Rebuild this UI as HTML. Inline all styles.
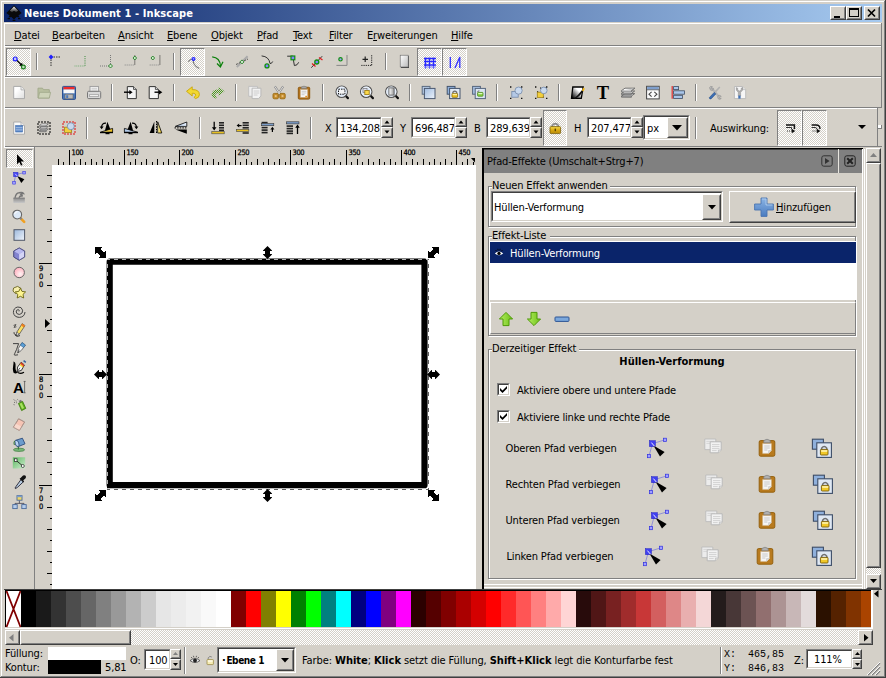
<!DOCTYPE html>
<html lang="de"><head><meta charset="utf-8"><title>Neues Dokument 1 - Inkscape</title>
<style>
html,body{margin:0;padding:0}
body{width:886px;height:678px;overflow:hidden;background:#d4d0c8;position:relative;font-family:"DejaVu Sans Condensed","Liberation Sans",sans-serif;font-size:11px;color:#000}
div,svg{position:absolute;box-sizing:border-box}
.t{white-space:nowrap;line-height:13px;height:13px;letter-spacing:-0.15px}
.t b,.b{letter-spacing:0}
.ic{overflow:visible}
u{text-decoration:underline;text-underline-offset:1px}
.chk{background-image:conic-gradient(#fff 25%,#d4d0c8 0 50%,#fff 0 75%,#d4d0c8 0);background-size:2px 2px}
.sunk{border:1px solid;border-color:#808080 #fff #fff #808080;background:#fff}
.sunk>i{position:absolute;left:0;top:0;right:0;bottom:0;border:1px solid;border-color:#404040 #d4d0c8 #d4d0c8 #404040}
.btn{border:1px solid;border-color:#fff #404040 #404040 #fff;background:#d4d0c8}
.btn>i{position:absolute;left:0;top:0;right:0;bottom:0;border:1px solid;border-color:#d4d0c8 #808080 #808080 #d4d0c8}
.tog{border:1px solid;border-color:#808080 #fff #fff #808080}
</style></head><body>
<div style="left:0px;top:0px;width:886px;height:678px;background:#d4d0c8"></div>
<div style="left:0px;top:0px;width:885px;height:1px;background:#d4d0c8"></div>
<div style="left:0px;top:0px;width:1px;height:677px;background:#d4d0c8"></div>
<div style="left:1px;top:1px;width:883px;height:1px;background:#ffffff"></div>
<div style="left:1px;top:1px;width:1px;height:675px;background:#ffffff"></div>
<div style="left:885px;top:0px;width:1px;height:678px;background:#404040"></div>
<div style="left:0px;top:677px;width:886px;height:1px;background:#404040"></div>
<div style="left:884px;top:1px;width:1px;height:676px;background:#808080"></div>
<div style="left:1px;top:676px;width:884px;height:1px;background:#808080"></div>
<div style="left:4px;top:4px;width:878px;height:18px;background:linear-gradient(90deg,#0a246a,#a6caf0)"></div>
<div class="t" style="left:24px;top:7px;color:#fff;font-weight:bold;font-size:11px;letter-spacing:0.1px">Neues Dokument 1 - Inkscape</div>
<svg class="ic" style="left:5.5px;top:5.0px" width="16" height="16" viewBox="0 0 16 16"><defs><linearGradient id="gik" x1="0" y1="0" x2="0" y2="1"><stop offset="0" stop-color="#fff"/><stop offset="0.5" stop-color="#888"/><stop offset="1" stop-color="#222"/></linearGradient></defs><path d="M8 0.3L15.7 8L12.4 10.6L13.6 12.4L10.6 12L8 14.4L5.4 12L2.4 12.4L3.6 10.6L0.3 8Z" fill="#0a0a0a"/><path d="M8 1.6L12.2 5.8L10 7.2L8 5.8L6 7.2L3.8 5.8Z" fill="url(#gik)"/><path d="M1.6 13.6h2.4M12 13.6h2.4M6.6 15.4h2.8" stroke="#0a0a0a" stroke-width="1.2"/></svg>
<div class="btn" style="left:830px;top:6px;width:16px;height:14px;"><i></i></div>
<svg class="ic" style="left:830.0px;top:5.0px" width="16" height="16" viewBox="0 0 16 16"><rect x="4" y="11" width="6" height="2" fill="#000"/></svg>
<div class="btn" style="left:846px;top:6px;width:16px;height:14px;"><i></i></div>
<svg class="ic" style="left:846.0px;top:5.0px" width="16" height="16" viewBox="0 0 16 16"><rect x="3.5" y="3.5" width="9" height="8" fill="none" stroke="#000" stroke-width="1"/><rect x="3" y="3" width="10" height="2" fill="#000"/></svg>
<div class="btn" style="left:864px;top:6px;width:16px;height:14px;"><i></i></div>
<svg class="ic" style="left:864.0px;top:5.0px" width="16" height="16" viewBox="0 0 16 16"><path d="M4 4.5L11 11.5M11 4.5L4 11.5" stroke="#000" stroke-width="1.7"/></svg>
<div class="t" style="left:14px;top:29px;"><u>D</u>atei</div>
<div class="t" style="left:52px;top:29px;"><u>B</u>earbeiten</div>
<div class="t" style="left:118px;top:29px;"><u>A</u>nsicht</div>
<div class="t" style="left:167px;top:29px;"><u>E</u>bene</div>
<div class="t" style="left:211px;top:29px;"><u>O</u>bjekt</div>
<div class="t" style="left:257px;top:29px;"><u>P</u>fad</div>
<div class="t" style="left:293px;top:29px;"><u>T</u>ext</div>
<div class="t" style="left:329px;top:29px;"><u>F</u>ilter</div>
<div class="t" style="left:367px;top:29px;">E<u>r</u>weiterungen</div>
<div class="t" style="left:451px;top:29px;"><u>H</u>ilfe</div>
<div style="left:4px;top:23px;width:877px;height:1px;background:#ffffff"></div>
<div style="left:4px;top:45px;width:877px;height:1px;background:#808080"></div>
<div style="left:4px;top:46px;width:877px;height:1px;background:#ffffff"></div>
<div style="left:4px;top:76px;width:877px;height:1px;background:#808080"></div>
<div style="left:4px;top:77px;width:877px;height:1px;background:#ffffff"></div>
<div style="left:4px;top:107px;width:877px;height:1px;background:#808080"></div>
<div style="left:4px;top:108px;width:877px;height:1px;background:#ffffff"></div>
<div style="left:877px;top:108px;width:5px;height:1px;background:#d4d0c8"></div>
<div style="left:4px;top:146px;width:874px;height:1px;background:#808080"></div>
<div style="left:878px;top:146px;width:4px;height:1px;background:#808080"></div>
<div style="left:881px;top:23px;width:1px;height:85px;background:#808080"></div>
<div style="left:877px;top:108px;width:1px;height:39px;background:#808080"></div>
<div style="left:4px;top:23px;width:1px;height:124px;background:#ffffff"></div>
<div style="left:878px;top:125px;width:3px;height:3px;background:#fff"></div>
<div style="left:881px;top:125px;width:1px;height:4px;background:#808080"></div>
<div style="left:878px;top:128px;width:4px;height:1px;background:#808080"></div>
<div class="tog chk" style="left:6px;top:48px;width:25px;height:28px;"></div>
<div class="tog chk" style="left:180px;top:48px;width:25px;height:28px;"></div>
<div class="tog chk" style="left:417px;top:48px;width:25px;height:28px;"></div>
<div class="tog chk" style="left:442px;top:48px;width:25px;height:28px;"></div>
<div style="left:36px;top:53px;width:1px;height:17px;background:#808080"></div>
<div style="left:37px;top:53px;width:1px;height:17px;background:#ffffff"></div>
<div style="left:173px;top:53px;width:1px;height:17px;background:#808080"></div>
<div style="left:174px;top:53px;width:1px;height:17px;background:#ffffff"></div>
<div style="left:385px;top:53px;width:1px;height:17px;background:#808080"></div>
<div style="left:386px;top:53px;width:1px;height:17px;background:#ffffff"></div>
<svg class="ic" style="left:7.0px;top:50.0px" width="24" height="24" viewBox="0 0 24 24"><path d="M9 9.5L15 15.5" stroke="#000" stroke-width="1.3"/><path d="M16 16.5L12.2 15.6L15.1 12.7Z" fill="#000"/><circle cx="8.2" cy="8.9" r="1.9" fill="#c8c8ff" stroke="#2020ff" stroke-width="1.2"/><circle cx="16.4" cy="17" r="1.9" fill="#c0e0c0" stroke="#208020" stroke-width="1.2"/></svg>
<svg class="ic" style="left:44.0px;top:50.0px" width="24" height="24" viewBox="0 0 24 24"><path d="M7 7H17M7 7V17" stroke="#333" stroke-width="1" stroke-dasharray="1.5 1"/><path d="M7 4.6L9.4 7L7 9.4L4.6 7Z" fill="#2020ff"/></svg>
<svg class="ic" style="left:68.5px;top:50.0px" width="24" height="24" viewBox="0 0 24 24"><path d="M16 6V16" stroke="#3a8a3a" stroke-width="1" stroke-dasharray="1 1.2"/><path d="M5.5 16H16" stroke="#7ab07a" stroke-width="1.2" stroke-dasharray="1 0.8"/></svg>
<svg class="ic" style="left:93.5px;top:50.0px" width="24" height="24" viewBox="0 0 24 24"><path d="M16.5 5V16M6 16H16.5" stroke="#777" stroke-width="1" stroke-dasharray="1 1"/><path d="M16.5 14L18.5 16L16.5 18L14.5 16Z" fill="#d0e8d0" stroke="#208020" stroke-width="0.9"/></svg>
<svg class="ic" style="left:118.5px;top:50.0px" width="24" height="24" viewBox="0 0 24 24"><path d="M5.7 15H15.8" stroke="#888" stroke-width="1" stroke-dasharray="1 1"/><path d="M15.8 5.5V15" stroke="#222" stroke-width="1" stroke-dasharray="1 1"/><path d="M15.8 6L17.6 8L15.8 10L14 8Z" fill="#d0e8d0" stroke="#208020" stroke-width="0.9"/></svg>
<svg class="ic" style="left:143.5px;top:50.0px" width="24" height="24" viewBox="0 0 24 24"><path d="M5.7 15H15.9" stroke="#888" stroke-width="1" stroke-dasharray="1 1"/><path d="M15.9 5.5V15" stroke="#222" stroke-width="1" stroke-dasharray="1 1"/><path d="M8.8 6L10.6 8L8.8 10L7 8Z" fill="#d0e8d0" stroke="#208020" stroke-width="0.9"/></svg>
<svg class="ic" style="left:180.5px;top:50.0px" width="24" height="24" viewBox="0 0 24 24"><path d="M7.3 11.6Q9.5 8.5 12.5 9Q11 15 18.2 18.4" fill="none" stroke="#777" stroke-width="1.1"/><circle cx="12.5" cy="8.9" r="2" fill="#2020ff"/><circle cx="12.5" cy="8.9" r="0.8" fill="#a0a0ff"/></svg>
<svg class="ic" style="left:205.0px;top:50.0px" width="24" height="24" viewBox="0 0 24 24"><path d="M7.2 6.8Q15 7.5 15.5 16" fill="none" stroke="#0a800a" stroke-width="1.2"/><path d="M12 13.5L15.4 17L18 11.8" fill="none" stroke="#0a800a" stroke-width="1.2"/></svg>
<svg class="ic" style="left:230.0px;top:50.0px" width="24" height="24" viewBox="0 0 24 24"><path d="M6.8 17L17.6 6.2" stroke="#aaa" stroke-width="2"/><path d="M6 14.5L18 9" stroke="#333" stroke-width="0.8" stroke-dasharray="2 1"/><path d="M12 9.9L14 11.9L12 13.9L10 11.9Z" fill="#d0e8d0" stroke="#208020" stroke-width="0.9"/></svg>
<svg class="ic" style="left:255.0px;top:50.0px" width="24" height="24" viewBox="0 0 24 24"><path d="M6.6 5.9Q14 6.5 15 13.5Q16.5 14 17.7 11.5" fill="none" stroke="#333" stroke-width="1"/><circle cx="12" cy="15.9" r="2" fill="#8080ff" stroke="#109010" stroke-width="1.3"/></svg>
<svg class="ic" style="left:280.0px;top:50.0px" width="24" height="24" viewBox="0 0 24 24"><path d="M7.2 6.2H12.8Q13.5 11 14.4 15.6Q17.5 15.5 18.7 12.3" fill="none" stroke="#333" stroke-width="1"/><rect x="11" y="6" width="3.8" height="3.8" fill="#8080ff" stroke="#109010" stroke-width="1.2"/></svg>
<svg class="ic" style="left:305.0px;top:50.0px" width="24" height="24" viewBox="0 0 24 24"><path d="M6.3 17.7L17.2 6.2" stroke="#333" stroke-width="1"/><path d="M7 13.5L10.5 16.5M14 7.5L17.5 10" stroke="#e02020" stroke-width="1.3"/><circle cx="11.8" cy="12" r="2" fill="#8080ff" stroke="#109010" stroke-width="1.3"/></svg>
<svg class="ic" style="left:330.0px;top:50.0px" width="24" height="24" viewBox="0 0 24 24"><path d="M6.4 15.4H17V5" fill="none" stroke="#888" stroke-width="1"/><circle cx="10.5" cy="9.3" r="1.7" fill="#a0a0ff" stroke="#109010" stroke-width="1.2"/></svg>
<svg class="ic" style="left:355.0px;top:50.0px" width="24" height="24" viewBox="0 0 24 24"><path d="M10.2 6.6V12M7.5 9.3H13" stroke="#222" stroke-width="1.2"/><path d="M6.3 15.4H16.7M16.7 5.2V15.4" stroke="#222" stroke-width="1" stroke-dasharray="1.2 1" fill="none"/></svg>
<svg class="ic" style="left:392.0px;top:50.0px" width="24" height="24" viewBox="0 0 24 24"><defs><linearGradient id="gpg" x1="0" y1="0" x2="1" y2="1"><stop offset="0" stop-color="#fff"/><stop offset="1" stop-color="#bbb"/></linearGradient></defs><rect x="9" y="6" width="8" height="12" fill="#444"/><rect x="8.2" y="5.2" width="8" height="11.8" fill="url(#gpg)" stroke="#666" stroke-width="0.6"/></svg>
<svg class="ic" style="left:417.0px;top:50.0px" width="24" height="24" viewBox="0 0 24 24"><path d="M7 8.5H19M7 11.5H19M7 15H19M8.5 7.5V18.5M12.5 7.5V18.5M16.5 7.5V18.5" stroke="#2828ff" stroke-width="1.3"/><path d="M7 17H19" stroke="#9090ff" stroke-width="1"/></svg>
<svg class="ic" style="left:443.0px;top:50.0px" width="24" height="24" viewBox="0 0 24 24"><path d="M7.3 7V18M12 18L16.8 7V18" fill="none" stroke="#3030ff" stroke-width="1.3"/></svg>
<div style="left:111px;top:84px;width:1px;height:17px;background:#808080"></div>
<div style="left:112px;top:84px;width:1px;height:17px;background:#ffffff"></div>
<div style="left:173px;top:84px;width:1px;height:17px;background:#808080"></div>
<div style="left:174px;top:84px;width:1px;height:17px;background:#ffffff"></div>
<div style="left:235px;top:84px;width:1px;height:17px;background:#808080"></div>
<div style="left:236px;top:84px;width:1px;height:17px;background:#ffffff"></div>
<div style="left:322px;top:84px;width:1px;height:17px;background:#808080"></div>
<div style="left:323px;top:84px;width:1px;height:17px;background:#ffffff"></div>
<div style="left:409px;top:84px;width:1px;height:17px;background:#808080"></div>
<div style="left:410px;top:84px;width:1px;height:17px;background:#ffffff"></div>
<div style="left:496px;top:84px;width:1px;height:17px;background:#808080"></div>
<div style="left:497px;top:84px;width:1px;height:17px;background:#ffffff"></div>
<div style="left:558px;top:84px;width:1px;height:17px;background:#808080"></div>
<div style="left:559px;top:84px;width:1px;height:17px;background:#ffffff"></div>
<div style="left:695px;top:84px;width:1px;height:17px;background:#808080"></div>
<div style="left:696px;top:84px;width:1px;height:17px;background:#ffffff"></div>
<svg class="ic" style="left:6.5px;top:81.0px" width="24" height="24" viewBox="0 0 24 24"><defs><linearGradient id="gnew" x1="0" y1="0" x2="1" y2="1"><stop offset="0.3" stop-color="#fff"/><stop offset="1" stop-color="#ddd"/></linearGradient></defs><path d="M6.7 5.4H14L17.5 8.9V17.6H6.7Z" fill="url(#gnew)" stroke="#aaa" stroke-width="1"/><path d="M14 5.4V8.9H17.5" fill="#eee" stroke="#aaa" stroke-width="0.8"/></svg>
<svg class="ic" style="left:31.5px;top:81.0px" width="24" height="24" viewBox="0 0 24 24"><path d="M6 7.2H10.5L11.5 8.7H17.3V17H6Z" fill="#b9c0a0" stroke="#a3aa8c" stroke-width="1"/><path d="M6.3 17L7.6 11.3H18.6L17.3 17Z" fill="#cdd3b8" stroke="#a3aa8c" stroke-width="0.9"/></svg>
<svg class="ic" style="left:56.5px;top:81.0px" width="24" height="24" viewBox="0 0 24 24"><rect x="5.5" y="5.4" width="13" height="13" rx="1" fill="#4a78b8" stroke="#2c5090" stroke-width="1"/><rect x="6.5" y="5.9" width="11" height="2.6" fill="#ee2c2c"/><rect x="6.5" y="8.5" width="11" height="3.8" fill="#f8f8f8"/><rect x="8" y="13.2" width="8" height="4.6" fill="#b8b8b8" stroke="#666" stroke-width="0.6"/><rect x="9.2" y="14.2" width="2" height="2.8" fill="#4a78b8"/></svg>
<svg class="ic" style="left:81.5px;top:81.0px" width="24" height="24" viewBox="0 0 24 24"><rect x="8" y="5.4" width="8.4" height="5" fill="#f4f4f4" stroke="#999" stroke-width="0.9"/><path d="M9.5 7.3H15M9.5 9H15" stroke="#bbb" stroke-width="0.7"/><rect x="5.5" y="10.3" width="13.2" height="7.3" rx="1.2" fill="#d8d8d8" stroke="#777" stroke-width="1"/><rect x="7.5" y="13.8" width="9.2" height="1.8" fill="#fafafa" stroke="#888" stroke-width="0.6"/></svg>
<svg class="ic" style="left:119.0px;top:81.0px" width="24" height="24" viewBox="0 0 24 24"><path d="M8.3 5.6H14.5L17.3 8.4V17.6H8.3Z" fill="#f4f4f4" stroke="#333" stroke-width="1"/><path d="M14.5 5.6V8.4H17.3" fill="#ddd" stroke="#333" stroke-width="0.8"/><path d="M5 11.2H11.5" stroke="#000" stroke-width="1.4"/><path d="M13.6 11.2L10.4 8.9V13.5Z" fill="#000"/></svg>
<svg class="ic" style="left:144.0px;top:81.0px" width="24" height="24" viewBox="0 0 24 24"><path d="M5.2 5.6H11.4L14.4 8.4V17.6H5.2Z" fill="#f4f4f4" stroke="#333" stroke-width="1"/><path d="M11.4 5.6V8.4H14.4" fill="#ddd" stroke="#333" stroke-width="0.8"/><path d="M10.5 11.2H16" stroke="#000" stroke-width="1.4"/><path d="M18.3 11.2L15 8.9V13.5Z" fill="#000"/></svg>
<svg class="ic" style="left:181.0px;top:81.0px" width="24" height="24" viewBox="0 0 24 24"><path d="M5.5 10.3L11.2 5.8V8.6Q18.4 8.4 18.4 13.8Q18.3 16.8 14.5 17.6Q13.4 17.2 13.3 16.2Q15.3 14.6 14.3 13Q13.4 12 11.2 12.3V15Z" fill="#f2d831" stroke="#c8a60c" stroke-width="0.9" stroke-linejoin="round"/></svg>
<svg class="ic" style="left:206.0px;top:81.0px" width="24" height="24" viewBox="0 0 24 24"><defs><pattern id="dith" width="2" height="2" patternUnits="userSpaceOnUse"><rect x="0" y="0" width="1" height="1" fill="#4a9a20"/><rect x="1" y="1" width="1" height="1" fill="#4a9a20"/></pattern></defs><path d="M18.5 10.3L12.8 5.8V8.6Q5.6 8.4 5.6 13.8Q5.7 16.8 9.5 17.6Q10.6 17.2 10.7 16.2Q8.7 14.6 9.7 13Q10.6 12 12.8 12.3V15Z" fill="url(#dith)"/></svg>
<svg class="ic" style="left:242.5px;top:81.0px" width="24" height="24" viewBox="0 0 24 24"><path d="M5.7 5.4H14.5V15.3H5.7Z" fill="#eeeeee" stroke="#bdbdbd" stroke-width="0.9"/><path d="M9.1 7.2H17.9V15L15.5 17.6H9.1Z" fill="#f2f2f2" stroke="#b5b5b5" stroke-width="0.9"/><path d="M10.7 10H16.3M10.7 12H16.3M10.7 14H14.5" stroke="#c4c4c4" stroke-width="0.8"/></svg>
<svg class="ic" style="left:267.0px;top:81.0px" width="24" height="24" viewBox="0 0 24 24"><path d="M7.8 5.4L13.6 14M16.2 5.4L10.4 14" stroke="#8c8c8c" stroke-width="2.2"/><path d="M7.8 5.4L13.6 14M16.2 5.4L10.4 14" stroke="#dcdcdc" stroke-width="1"/><rect x="6" y="12.4" width="5.4" height="5.4" rx="1.2" fill="#c58d2c" stroke="#9a6a12" stroke-width="0.9"/><rect x="12.8" y="12.4" width="5.4" height="5.4" rx="1.2" fill="#c58d2c" stroke="#9a6a12" stroke-width="0.9"/><rect x="7.8" y="14.1" width="1.8" height="2" fill="#e8c080"/><rect x="14.6" y="14.1" width="1.8" height="2" fill="#e8c080"/></svg>
<svg class="ic" style="left:292.0px;top:81.0px" width="24" height="24" viewBox="0 0 24 24"><rect x="6.3" y="6.3" width="11.4" height="11.8" rx="1" fill="#b3731d" stroke="#8f5a10" stroke-width="1"/><rect x="8.4" y="8.5" width="7.2" height="7.8" fill="#f6f6f6" stroke="#c9b08a" stroke-width="0.5"/><path d="M9.6 10.3H14.4M9.6 12H14.4M9.6 13.7H12.5" stroke="#bbb" stroke-width="0.7"/><path d="M9.3 7.6V6Q12 4.3 14.7 6V7.6Z" fill="#a8a8a8" stroke="#777" stroke-width="0.6"/><rect x="13.3" y="14.8" width="1.8" height="1.4" fill="#e89020"/></svg>
<svg class="ic" style="left:330.0px;top:81.0px" width="24" height="24" viewBox="0 0 24 24"><path d="M15.6 14.8L17.9 17.1" stroke="#111" stroke-width="2.2" stroke-linecap="round"/><circle cx="11.7" cy="10.7" r="5.7" fill="#d7e3f3" stroke="#555" stroke-width="1.2"/><circle cx="11.7" cy="10.7" r="4.6" fill="none" stroke="#f4f8ff" stroke-width="0.9"/><rect x="8.5" y="8.2" width="6.4" height="5" fill="#f4f4f4" stroke="#000" stroke-width="0.9" stroke-dasharray="1.5 1"/></svg>
<svg class="ic" style="left:355.0px;top:81.0px" width="24" height="24" viewBox="0 0 24 24"><path d="M15.6 14.8L17.9 17.1" stroke="#111" stroke-width="2.2" stroke-linecap="round"/><circle cx="11.2" cy="10.7" r="5.7" fill="#d7e3f3" stroke="#555" stroke-width="1.2"/><circle cx="11.2" cy="10.7" r="4.6" fill="none" stroke="#f4f8ff" stroke-width="0.9"/><rect x="8" y="7.6" width="4" height="4" fill="#dde" stroke="#777" stroke-width="0.7"/><rect x="9.8" y="9.4" width="4.4" height="4.2" fill="#fcd94a" stroke="#9a7a10" stroke-width="0.8"/></svg>
<svg class="ic" style="left:380.0px;top:81.0px" width="24" height="24" viewBox="0 0 24 24"><defs><linearGradient id="gzp" x1="0" y1="0" x2="1" y2="0"><stop offset="0" stop-color="#fff"/><stop offset="1" stop-color="#999"/></linearGradient></defs><path d="M15.6 14.8L17.9 17.1" stroke="#111" stroke-width="2.2" stroke-linecap="round"/><circle cx="11.3" cy="10.7" r="5.7" fill="#d7e3f3" stroke="#555" stroke-width="1.2"/><circle cx="11.3" cy="10.7" r="4.6" fill="none" stroke="#f4f8ff" stroke-width="0.9"/><rect x="8.9" y="6.9" width="5.2" height="7.2" fill="url(#gzp)" stroke="#555" stroke-width="0.8"/></svg>
<svg class="ic" style="left:417.0px;top:81.0px" width="24" height="24" viewBox="0 0 24 24"><defs><linearGradient id="gsq" x1="0" y1="0" x2="1" y2="1"><stop offset="0" stop-color="#9fbbe0"/><stop offset="1" stop-color="#eef3fa"/></linearGradient></defs><rect x="5.2" y="5.4" width="7.8" height="7.8" fill="#b7cbe6" stroke="#5a6a80" stroke-width="1"/><rect x="7.4" y="7.4" width="10.6" height="10.2" fill="url(#gsq)" stroke="#4a5870" stroke-width="1"/></svg>
<svg class="ic" style="left:442.0px;top:81.0px" width="24" height="24" viewBox="0 0 24 24"><defs><linearGradient id="gsq" x1="0" y1="0" x2="1" y2="1"><stop offset="0" stop-color="#9fbbe0"/><stop offset="1" stop-color="#eef3fa"/></linearGradient></defs><rect x="5.2" y="5.4" width="7.8" height="7.8" fill="#8fb0dc" stroke="#44546c" stroke-width="1"/><rect x="7.6" y="7.4" width="10.4" height="10.2" fill="#dfe8f4" stroke="#44546c" stroke-width="1"/><path d="M10.9 12.6V11.2Q12.8 9 14.7 11.2V12.6" fill="none" stroke="#6a6a6a" stroke-width="1.2"/><rect x="10" y="12.4" width="5.6" height="3.9" rx="0.6" fill="#f0c828" stroke="#8a6a08" stroke-width="0.8"/><rect x="10.6" y="12.9" width="4.4" height="1.2" fill="#fff0a0"/></svg>
<svg class="ic" style="left:466.5px;top:81.0px" width="24" height="24" viewBox="0 0 24 24"><defs><linearGradient id="gsq" x1="0" y1="0" x2="1" y2="1"><stop offset="0" stop-color="#9fbbe0"/><stop offset="1" stop-color="#eef3fa"/></linearGradient></defs><rect x="5.6" y="5.4" width="7.8" height="7.8" fill="#a9c1e2" stroke="#56667e" stroke-width="1"/><rect x="8.2" y="7.4" width="10.2" height="10.2" fill="#dbe5f2" stroke="#56667e" stroke-width="1"/><path d="M10.5 11.3Q10.5 9.6 12.4 9.9" fill="none" stroke="#777" stroke-width="1"/><rect x="10.6" y="11.4" width="5.4" height="3.8" rx="0.6" fill="#8cd24a" stroke="#4a8a18" stroke-width="0.8"/><rect x="11.3" y="12" width="4" height="1.1" fill="#e0f8c0"/></svg>
<svg class="ic" style="left:503.5px;top:81.0px" width="24" height="24" viewBox="0 0 24 24"><path d="M6 5.3h1.4v1.4H6zM17 5.3h1.4v1.4H17zM6 16.7h1.4v1.4H6zM17 16.7h1.4v1.4H17z" fill="#111"/><rect x="7.8" y="10.4" width="6.4" height="5.8" fill="#b4c9e6" stroke="#7288a8" stroke-width="0.8"/><circle cx="14.6" cy="9.6" r="3.6" fill="#c9d9ee" stroke="#7288a8" stroke-width="0.8"/></svg>
<svg class="ic" style="left:528.5px;top:81.0px" width="24" height="24" viewBox="0 0 24 24"><path d="M6 5.3h1.4v1.4H6zM17 5.3h1.4v1.4H17zM6 16.7h1.4v1.4H6zM17 16.7h1.4v1.4H17z" fill="#111"/><path d="M8 10.3h1.2v1.2H8zM13.6 15.6h1.2v1.2h-1.2zM16.4 6h1.2v1.2h-1.2zM11 6.5h1.2v1.2H11z" fill="#111"/><rect x="8.3" y="11.2" width="6" height="5.2" fill="#f3cf3c" stroke="#a08418" stroke-width="0.8"/><circle cx="14.8" cy="9.4" r="3.3" fill="#c9d9ee" stroke="#7288a8" stroke-width="0.8"/></svg>
<svg class="ic" style="left:566.0px;top:81.0px" width="24" height="24" viewBox="0 0 24 24"><defs><linearGradient id="gfl" x1="1" y1="0" x2="0" y2="1"><stop offset="0.35" stop-color="#fff"/><stop offset="0.95" stop-color="#000"/></linearGradient></defs><path d="M6.8 6H17.2L15.3 17.4H5.5Z" fill="url(#gfl)" stroke="#000" stroke-width="1.3"/><path d="M8.2 17.3Q12 14.5 15.8 9.3L17.3 10.4Q13.5 15.5 9 17.9Z" fill="#111"/><path d="M15.8 9.3L17.6 6.6L18.9 7.8L17.3 10.4Z" fill="#f4b818"/></svg>
<svg class="ic" style="left:590.5px;top:81.0px" width="24" height="24" viewBox="0 0 24 24"><text x="12" y="18" text-anchor="middle" font-family="Liberation Serif,DejaVu Serif,serif" font-weight="bold" font-size="18.5" fill="#000">T</text></svg>
<svg class="ic" style="left:615.5px;top:81.0px" width="24" height="24" viewBox="0 0 24 24"><path d="M5.5 15L9 12.6H18.7L15.4 15Z" fill="#d8d8d8" stroke="#555" stroke-width="0.8"/><path d="M5.5 15V16.2L15.4 16.3V15" fill="#999" stroke="#555" stroke-width="0.6"/><path d="M5.5 12.4L9 10H18.7L15.4 12.4Z" fill="#ececec" stroke="#555" stroke-width="0.8"/><path d="M5.5 12.4V13.6L15.4 13.7V12.4" fill="#aaa" stroke="#555" stroke-width="0.6"/><path d="M5.5 9.6L9 7.2H18.7L15.4 9.6Z" fill="#fff" stroke="#555" stroke-width="0.8"/><path d="M5.5 9.6V10.9L15.4 11V9.6L18.7 7.2" fill="#ccc" stroke="#555" stroke-width="0.6"/></svg>
<svg class="ic" style="left:640.5px;top:81.0px" width="24" height="24" viewBox="0 0 24 24"><rect x="5.6" y="5.3" width="12.6" height="12.6" fill="#fafafa" stroke="#444" stroke-width="1"/><rect x="6.1" y="5.8" width="11.6" height="2.8" fill="#7f9fcc"/><path d="M5.6 8.8H18.2" stroke="#444" stroke-width="0.7"/><path d="M10.6 10.8L8 13.2L10.6 15.6M13.3 10.8L15.9 13.2L13.3 15.6" fill="none" stroke="#444" stroke-width="1.1"/></svg>
<svg class="ic" style="left:665.5px;top:81.0px" width="24" height="24" viewBox="0 0 24 24"><path d="M6.2 5.1V17.7" stroke="#e03c3c" stroke-width="1.3"/><rect x="7.6" y="5.6" width="5" height="3" fill="#a9c6ea" stroke="#3c4c64" stroke-width="0.8"/><rect x="7.6" y="9.8" width="10.8" height="3.4" fill="#a9c6ea" stroke="#3c4c64" stroke-width="0.8"/><rect x="7.6" y="14.3" width="8.8" height="3.2" fill="#a9c6ea" stroke="#3c4c64" stroke-width="0.8"/></svg>
<svg class="ic" style="left:702.5px;top:81.0px" width="24" height="24" viewBox="0 0 24 24"><path d="M8 6.2L15.8 15.6" stroke="#b4b4b4" stroke-width="2.2"/><path d="M6.5 6.5Q7.2 4.7 9.4 5.6L8 7.2L8.8 8.2L10.6 7.4Q10.6 9.6 8.4 9.6Q6.6 9 6.5 6.5Z" fill="#b8b8b8" stroke="#8a8a8a" stroke-width="0.5"/><path d="M15 14.8Q17 13.6 18.3 15.4L16.6 16L16.8 17.4L18.3 17.4Q17 19 15.4 18Q14.2 16.6 15 14.8Z" fill="#b8b8b8" stroke="#8a8a8a" stroke-width="0.5"/><path d="M16.8 6L11.6 11.6" stroke="#b0b0b0" stroke-width="1.6"/><path d="M11.2 11.4L12.8 12.9L8 17.9Q6.6 18.3 6.2 16.8Z" fill="#3c6eb4" stroke="#204a87" stroke-width="0.6"/></svg>
<svg class="ic" style="left:727.5px;top:81.0px" width="24" height="24" viewBox="0 0 24 24"><path d="M6.4 5.5H14.6L17.7 8.6V17.6H6.4Z" fill="#f6f6f6" stroke="#b8b8b8" stroke-width="0.9"/><path d="M14.6 5.5V8.6H17.7" fill="#e8e8e8" stroke="#b8b8b8" stroke-width="0.7"/><path d="M8.2 6.6Q7.6 9.6 10.3 11.2V15H12.6V11.2Q15.3 9.6 14.7 6.6L13.2 7.2V9.2L11.4 10L9.7 9.2V7.2Z" fill="#b0b0b0" stroke="#8c8c8c" stroke-width="0.5"/><rect x="10.3" y="14.6" width="2.3" height="3" fill="#3c6eb4"/></svg>
<div style="left:86px;top:117px;width:1px;height:22px;background:#808080"></div>
<div style="left:87px;top:117px;width:1px;height:22px;background:#ffffff"></div>
<div style="left:199px;top:117px;width:1px;height:22px;background:#808080"></div>
<div style="left:200px;top:117px;width:1px;height:22px;background:#ffffff"></div>
<div style="left:310px;top:117px;width:1px;height:22px;background:#808080"></div>
<div style="left:311px;top:117px;width:1px;height:22px;background:#ffffff"></div>
<div style="left:695px;top:117px;width:1px;height:22px;background:#808080"></div>
<div style="left:696px;top:117px;width:1px;height:22px;background:#ffffff"></div>
<svg class="ic" style="left:6.5px;top:115.5px" width="24" height="24" viewBox="0 0 24 24"><path d="M6.7 6H14L17.5 9.5V18.2H6.7Z" fill="#fafafa" stroke="#aaa" stroke-width="1"/><path d="M14 6V9.5H17.5" fill="#eee" stroke="#aaa" stroke-width="0.8"/><rect x="8.7" y="9.6" width="6.8" height="6.4" fill="#5a88c8" stroke="#3a68a8" stroke-width="0.6"/><path d="M8.7 11.7H15.5M8.7 13.9H15.5" stroke="#c8daf0" stroke-width="0.7"/></svg>
<svg class="ic" style="left:31.5px;top:115.5px" width="24" height="24" viewBox="0 0 24 24"><rect x="6" y="6" width="12" height="12" fill="none" stroke="#000" stroke-width="1" stroke-dasharray="2 1"/><path d="M7.6 14.6L9.8 13H16.4L14.2 14.6Z" fill="#e4e4e4" stroke="#555" stroke-width="0.7"/><path d="M7.6 14.6V15.8H14.2V14.6" fill="#999" stroke="#555" stroke-width="0.5"/><path d="M7.6 12L9.8 10.4H16.4L14.2 12Z" fill="#f0f0f0" stroke="#555" stroke-width="0.7"/><path d="M7.6 12V13.1H14.2V12" fill="#aaa" stroke="#555" stroke-width="0.5"/><path d="M7.6 9.4L9.8 7.8H16.4L14.2 9.4Z" fill="#fff" stroke="#555" stroke-width="0.7"/><path d="M7.6 9.4V10.5H14.2V9.4" fill="#bbb" stroke="#555" stroke-width="0.5"/></svg>
<svg class="ic" style="left:56.5px;top:115.5px" width="24" height="24" viewBox="0 0 24 24"><rect x="6" y="6" width="12" height="12" fill="none" stroke="#e01010" stroke-width="1" stroke-dasharray="2 1"/><rect x="7.6" y="11.2" width="7" height="5.2" fill="#f3cf3c" stroke="#a08418" stroke-width="0.8"/><circle cx="13.8" cy="10.2" r="3.5" fill="#c9d9ee" stroke="#7288a8" stroke-width="0.8"/></svg>
<svg class="ic" style="left:93.5px;top:115.5px" width="24" height="24" viewBox="0 0 24 24"><defs><linearGradient id="gyl" x1="0" y1="0" x2="1" y2="0"><stop offset="0" stop-color="#fff6b0"/><stop offset="1" stop-color="#e8b810"/></linearGradient></defs><path d="M13.4 5.8L10.6 15.8H17.3Z" fill="#000"/><path d="M6.4 16.2L18.6 12.4V16.2Z" fill="url(#gyl)" stroke="#000" stroke-width="0.8"/><path d="M6 16.6H19" stroke="#000" stroke-width="1.2"/><path d="M11.5 16.6H15.5V18.2H11.5Z" fill="#000"/><path d="M12 7.2Q7.6 7 7.6 11.5" fill="none" stroke="#000" stroke-width="1.2"/><path d="M5.6 10.6H9.6L7.6 13.2Z" fill="#000"/></svg>
<svg class="ic" style="left:119.0px;top:115.5px" width="24" height="24" viewBox="0 0 24 24"><defs><linearGradient id="gbl2" x1="0" y1="0" x2="1" y2="0"><stop offset="0" stop-color="#a8c4e8"/><stop offset="1" stop-color="#e8f0fa"/></linearGradient></defs><path d="M11.6 5.8L14.4 15.8H7.7Z" fill="#000"/><path d="M18.6 16.2L5.4 12.4V16.2Z" fill="url(#gbl2)" stroke="#000" stroke-width="0.8"/><path d="M5 16.6H19" stroke="#000" stroke-width="1.2"/><path d="M9.5 16.6H13.5V18.2H9.5Z" fill="#000"/><path d="M13 7.2Q17.4 7 17.4 11.5" fill="none" stroke="#000" stroke-width="1.2"/><path d="M15.4 10.6H19.4L17.4 13.2Z" fill="#000"/></svg>
<svg class="ic" style="left:144.0px;top:115.5px" width="24" height="24" viewBox="0 0 24 24"><path d="M10.3 5.8V17H5.6Z" fill="#000"/><path d="M12.5 5V18" stroke="#000" stroke-width="1" stroke-dasharray="1.6 1"/><path d="M13.7 5.8V17H17.8Z" fill="url(#gyl)" stroke="#000" stroke-width="0.8"/></svg>
<svg class="ic" style="left:169.0px;top:115.5px" width="24" height="24" viewBox="0 0 24 24"><path d="M6.3 10.4L17.8 6V10.4Z" fill="url(#gbl2)" stroke="#000" stroke-width="0.8"/><path d="M5.5 11.9H18.5" stroke="#000" stroke-width="1" stroke-dasharray="1.6 1"/><path d="M6.3 13.4H17.8V17.8Z" fill="#000"/></svg>
<svg class="ic" style="left:206.0px;top:115.5px" width="24" height="24" viewBox="0 0 24 24"><rect x="13" y="6" width="5" height="1.6" fill="#222"/><rect x="13" y="8.5" width="5" height="1.6" fill="#222"/><rect x="13" y="11" width="5" height="1.6" fill="#222"/><rect x="13" y="13.5" width="5" height="1.6" fill="#222"/><rect x="5.8" y="15.6" width="12.4" height="2.2" fill="#e8c020" stroke="#444" stroke-width="0.6"/><path d="M8.2 5.8V12" stroke="#000" stroke-width="1.3"/><path d="M5.9 11.3H10.5L8.2 14.6Z" fill="#000"/></svg>
<svg class="ic" style="left:231.0px;top:115.5px" width="24" height="24" viewBox="0 0 24 24"><rect x="11.6" y="6" width="6.200000000000001" height="1.6" fill="#222"/><rect x="11.6" y="8.5" width="6.200000000000001" height="1.6" fill="#222"/><rect x="11.6" y="11" width="6.200000000000001" height="1.6" fill="#222"/><rect x="11.6" y="16.2" width="6.200000000000001" height="1.6" fill="#222"/><rect x="5.6" y="13.4" width="12.2" height="2.1" fill="#e8c020" stroke="#444" stroke-width="0.6"/><path d="M7.6 9.6H10.6" stroke="#000" stroke-width="1.2"/><path d="M5.6 9.6L8.2 7.6V11.6Z" fill="#000"/></svg>
<svg class="ic" style="left:256.0px;top:115.5px" width="24" height="24" viewBox="0 0 24 24"><rect x="5.6" y="5.8" width="6.0" height="1.6" fill="#222"/><rect x="5.6" y="7.6" width="12.2" height="2.1" fill="#7a9cc8" stroke="#333" stroke-width="0.6"/><rect x="5.6" y="10.8" width="6.0" height="1.6" fill="#222"/><rect x="5.6" y="13.3" width="6.0" height="1.6" fill="#222"/><rect x="5.6" y="15.8" width="6.0" height="1.6" fill="#222"/><path d="M16.4 13V16" stroke="#000" stroke-width="1.2"/><path d="M14.4 13.4H18.4L16.4 10.8Z" fill="#000"/></svg>
<svg class="ic" style="left:281.0px;top:115.5px" width="24" height="24" viewBox="0 0 24 24"><rect x="5.6" y="5.8" width="12.4" height="2.1" fill="#7a9cc8" stroke="#333" stroke-width="0.6"/><rect x="5.6" y="9.3" width="6.4" height="1.6" fill="#222"/><rect x="5.6" y="11.8" width="6.4" height="1.6" fill="#222"/><rect x="5.6" y="14.3" width="6.4" height="1.6" fill="#222"/><rect x="5.6" y="16.6" width="6.4" height="1.6" fill="#222"/><path d="M16.5 11V18" stroke="#000" stroke-width="1.3"/><path d="M14.2 11.8H18.8L16.5 8.6Z" fill="#000"/></svg>
<div class="t" style="left:325px;top:122px;">X</div>
<div class="sunk" style="left:336px;top:117px;width:46px;height:21px;"><i></i></div>
<div class="t" style="left:340px;top:122px;width:40px;overflow:hidden">134,208</div>
<div class="btn" style="left:381px;top:117px;width:12px;height:10px;"><i></i></div>
<div class="btn" style="left:381px;top:127px;width:12px;height:11px;"><i></i></div>
<svg class="ic" style="left:384px;top:120px" width="6" height="4"><path d="M3 0.5L5.5 3.5H0.5Z" fill="#000"/></svg>
<svg class="ic" style="left:384px;top:130px" width="6" height="4"><path d="M0.5 0.5H5.5L3 3.5Z" fill="#000"/></svg>
<div class="t" style="left:400px;top:122px;">Y</div>
<div class="sunk" style="left:411px;top:117px;width:45px;height:21px;"><i></i></div>
<div class="t" style="left:415px;top:122px;width:39px;overflow:hidden">696,487</div>
<div class="btn" style="left:455px;top:117px;width:12px;height:10px;"><i></i></div>
<div class="btn" style="left:455px;top:127px;width:12px;height:11px;"><i></i></div>
<svg class="ic" style="left:458px;top:120px" width="6" height="4"><path d="M3 0.5L5.5 3.5H0.5Z" fill="#000"/></svg>
<svg class="ic" style="left:458px;top:130px" width="6" height="4"><path d="M0.5 0.5H5.5L3 3.5Z" fill="#000"/></svg>
<div class="t" style="left:474px;top:122px;">B</div>
<div class="sunk" style="left:486px;top:117px;width:45px;height:21px;"><i></i></div>
<div class="t" style="left:490px;top:122px;width:39px;overflow:hidden">289,639</div>
<div class="btn" style="left:530px;top:117px;width:12px;height:10px;"><i></i></div>
<div class="btn" style="left:530px;top:127px;width:12px;height:11px;"><i></i></div>
<svg class="ic" style="left:533px;top:120px" width="6" height="4"><path d="M3 0.5L5.5 3.5H0.5Z" fill="#000"/></svg>
<svg class="ic" style="left:533px;top:130px" width="6" height="4"><path d="M0.5 0.5H5.5L3 3.5Z" fill="#000"/></svg>
<div class="tog chk" style="left:543px;top:110px;width:24px;height:36px;"></div>
<svg class="ic" style="left:543.0px;top:116.0px" width="24" height="24" viewBox="0 0 24 24"><path d="M9.2 12V9.6Q12.3 5.6 15.4 9.6V12" fill="none" stroke="#8a8a8a" stroke-width="1.6"/><defs><linearGradient id="glk" x1="0" y1="0" x2="0" y2="1"><stop offset="0" stop-color="#f6dc50"/><stop offset="0.5" stop-color="#d9a810"/><stop offset="1" stop-color="#b88a08"/></linearGradient></defs><rect x="7" y="10.6" width="10.6" height="7" rx="1" fill="url(#glk)" stroke="#7a5c06" stroke-width="0.8"/><rect x="11.6" y="12.6" width="1.4" height="2.6" fill="#5a4404"/></svg>
<div class="t" style="left:574px;top:122px;">H</div>
<div class="sunk" style="left:587px;top:117px;width:45px;height:21px;"><i></i></div>
<div class="t" style="left:591px;top:122px;width:39px;overflow:hidden">207,477</div>
<div class="btn" style="left:631px;top:117px;width:12px;height:10px;"><i></i></div>
<div class="btn" style="left:631px;top:127px;width:12px;height:11px;"><i></i></div>
<svg class="ic" style="left:634px;top:120px" width="6" height="4"><path d="M3 0.5L5.5 3.5H0.5Z" fill="#000"/></svg>
<svg class="ic" style="left:634px;top:130px" width="6" height="4"><path d="M0.5 0.5H5.5L3 3.5Z" fill="#000"/></svg>
<div class="sunk" style="left:643px;top:115px;width:47px;height:25px;"><i></i></div>
<div class="t" style="left:647px;top:122px;">px</div>
<div class="btn" style="left:667px;top:117px;width:21px;height:21px;"><i></i></div>
<svg class="ic" style="left:671.5px;top:125px" width="10" height="6"><path d="M0 0H10L5 5.5Z" fill="#000"/></svg>
<div class="t" style="left:710px;top:122px;">Auswirkung:</div>
<div class="tog chk" style="left:777px;top:110px;width:25px;height:36px;"></div>
<div class="tog chk" style="left:802px;top:110px;width:25px;height:36px;"></div>
<svg class="ic" style="left:778.0px;top:116.0px" width="24" height="24" viewBox="0 0 24 24"><path d="M8 9H16.4V13" fill="none" stroke="#111" stroke-width="1.5"/><path d="M8 11.5H13.5V13.4" fill="none" stroke="#333" stroke-width="1"/><path d="M9 15H14" stroke="#333" stroke-width="1" stroke-dasharray="1 1"/><path d="M13.8 12.8L17.2 15L13.8 17.2Z" fill="#111"/></svg>
<svg class="ic" style="left:803.0px;top:116.0px" width="24" height="24" viewBox="0 0 24 24"><path d="M8.6 9H13Q17 9 17 13" fill="none" stroke="#111" stroke-width="1.3"/><path d="M8.6 11.5H12Q14 11.5 14 13.4" fill="none" stroke="#333" stroke-width="1"/><path d="M9.5 15H14" stroke="#333" stroke-width="1" stroke-dasharray="1 1"/><path d="M13.8 12.8L17.4 15L13.8 17.2Z" fill="#111"/></svg>
<svg class="ic" style="left:857.5px;top:125px" width="8" height="4"><path d="M0 0H8L4 4Z" fill="#000"/></svg>
<div style="left:4px;top:147px;width:30px;height:1px;background:#ffffff"></div>
<div style="left:34px;top:147px;width:1px;height:442px;background:#808080"></div>
<div class="tog chk" style="left:6px;top:149px;width:27px;height:19px;"></div>
<svg class="ic" style="left:9.0px;top:148.5px" width="20" height="20" viewBox="0 0 20 20"><path d="M8 5.2V15.2L10.3 13L12 16.6L13.5 15.9L11.8 12.4H15Z" fill="#000"/></svg>
<svg class="ic" style="left:9.0px;top:167.5px" width="20" height="20" viewBox="0 0 20 20"><path d="M6.8 6.5L15.1 4.7M6.8 6.5L5 14.8" stroke="#7878d8" stroke-width="0.8" fill="none"/><rect x="4.6" y="4.3" width="4.4" height="4.4" fill="#4848f4" stroke="#2828c8" stroke-width="0.5"/><rect x="13.8" y="3.4" width="2.6" height="2.6" fill="#a0a0ff" stroke="#3838e0" stroke-width="0.6"/><rect x="3.7" y="13.5" width="2.6" height="2.6" fill="#a0a0ff" stroke="#3838e0" stroke-width="0.6"/><path d="M8.2 7.9L15.4 11.2L12.3 15Z" fill="#000"/><path d="M6.2 5.8L8.6 8.4" stroke="#fff" stroke-width="0.7"/></svg>
<svg class="ic" style="left:9.0px;top:186.5px" width="20" height="20" viewBox="0 0 20 20"><defs><linearGradient id="gtw" x1="0" y1="0" x2="0" y2="1"><stop offset="0" stop-color="#8a8a8a"/><stop offset="1" stop-color="#c8c8c8"/></linearGradient></defs><rect x="4.4" y="11" width="11.4" height="5" fill="url(#gtw)"/><path d="M4.4 11H15.8" stroke="#777" stroke-width="0.8"/><path d="M6 10.8Q7 6 10 5.8Q13.6 5 14.6 6.6Q12 6.4 11.6 7.6Q13.6 8 13.2 9Q10.6 8.6 10 10.8" fill="none" stroke="#777" stroke-width="1.4"/></svg>
<svg class="ic" style="left:9.0px;top:205.5px" width="20" height="20" viewBox="0 0 20 20"><path d="M11.2 11.8L15.2 15.8" stroke="#f0a020" stroke-width="2.6" stroke-linecap="round"/><path d="M11.2 11.8L12.6 13.2" stroke="#888" stroke-width="2.2"/><circle cx="8.2" cy="8.6" r="4.4" fill="#dce8f6" stroke="#666" stroke-width="1.1"/><path d="M5.6 8Q6.2 5.8 8.6 5.6" fill="none" stroke="#fff" stroke-width="1"/></svg>
<svg class="ic" style="left:9.0px;top:224.5px" width="20" height="20" viewBox="0 0 20 20"><defs><linearGradient id="grc" x1="0" y1="0" x2="1" y2="1"><stop offset="0" stop-color="#9cb8dc"/><stop offset="1" stop-color="#f0f4fa"/></linearGradient></defs><rect x="5" y="4.7" width="10.6" height="10.6" fill="url(#grc)" stroke="#505868" stroke-width="1"/></svg>
<svg class="ic" style="left:9.0px;top:243.5px" width="20" height="20" viewBox="0 0 20 20"><path d="M10.2 4L15.6 7V13L10.2 16.2L4.8 13V7Z" fill="#a8a8e8" stroke="#505080" stroke-width="0.9"/><path d="M4.8 7L10.2 10V16.2L4.8 13Z" fill="#8484d0"/><path d="M10.2 10L15.6 7V13L10.2 16.2Z" fill="#d4d4f6"/><path d="M10.2 4L15.6 7L10.2 10L4.8 7Z" fill="#b8b8ee"/><path d="M10.2 4L15.6 7V13L10.2 16.2L4.8 13V7Z" fill="none" stroke="#505080" stroke-width="0.9"/></svg>
<svg class="ic" style="left:9.0px;top:262.5px" width="20" height="20" viewBox="0 0 20 20"><defs><radialGradient id="gel" cx="0.6" cy="0.65" r="0.7"><stop offset="0" stop-color="#fff4f4"/><stop offset="1" stop-color="#ffa8b8"/></radialGradient></defs><circle cx="10.2" cy="9.5" r="5.2" fill="url(#gel)" stroke="#666" stroke-width="1"/></svg>
<svg class="ic" style="left:9.0px;top:281.5px" width="20" height="20" viewBox="0 0 20 20"><path d="M4.6 6L8.6 4.4L12 6.4L11 10L6.4 11.6L4 9Z" fill="#f8f0b0" stroke="#6a6420" stroke-width="0.9"/><path d="M11.4 6.2L13 9.4L16.6 9.9L14 12.4L14.7 16L11.4 14.3L8.2 16L8.8 12.4L6.2 9.9L9.8 9.4Z" fill="#fdf490" stroke="#6a6410" stroke-width="0.9"/></svg>
<svg class="ic" style="left:9.0px;top:300.5px" width="20" height="20" viewBox="0 0 20 20"><path d="M10 10.4Q10.8 9 9.2 8.6Q7 8.8 7.2 11Q7.8 13.8 10.8 13.4Q14 12.6 13.6 9.2Q12.8 5.6 8.8 6Q4.4 6.8 4.4 11.4Q5 16.2 10.4 16.4Q15.6 16 16 11" fill="none" stroke="#444" stroke-width="1"/></svg>
<svg class="ic" style="left:9.0px;top:319.5px" width="20" height="20" viewBox="0 0 20 20"><path d="M4.6 5.4L7 4.6L5 7.4L7.4 6.8M5 12Q4.4 14.6 7 14.8" fill="none" stroke="#333" stroke-width="0.8"/><path d="M13.2 3.6L16 5.6L10.4 14L7.4 15.8L7.8 12.2Z" fill="#fce060" stroke="#555" stroke-width="0.8"/><path d="M13.2 3.6L16 5.6L14.8 7.4L12 5.4Z" fill="#f08020"/><path d="M7.8 12.2L10.4 14L7.4 15.8Z" fill="#eee" stroke="#444" stroke-width="0.6"/><path d="M6 15Q8 17.4 11 15.6" fill="none" stroke="#222" stroke-width="0.9"/></svg>
<svg class="ic" style="left:9.0px;top:338.5px" width="20" height="20" viewBox="0 0 20 20"><path d="M4 4.6H9.6L7.6 10.4L5.6 14.8Q4.6 16 6 16.2L9 15.8" fill="none" stroke="#333" stroke-width="0.9"/><path d="M13 3.6L16.4 6L12.4 11.4L8.8 14L9.4 9.4Z" fill="#f4f4f4" stroke="#555" stroke-width="0.8"/><path d="M13 3.6L16.4 6L14.6 8.6L11.4 6.2Z" fill="#5aa0d8" stroke="#306090" stroke-width="0.6"/><path d="M8.8 14L10.2 10.6" stroke="#333" stroke-width="0.7"/></svg>
<svg class="ic" style="left:9.0px;top:357.5px" width="20" height="20" viewBox="0 0 20 20"><path d="M4.4 3.6Q6.8 4 6.6 8Q6 12.6 8.4 14.2Q7 16.8 4.4 14.6Q3.4 10.6 4.2 7.6Q4.8 4.8 4.4 3.6Z" fill="#000"/><path d="M8.4 14.2Q11 16.6 15 14.2" fill="none" stroke="#000" stroke-width="1.1"/><path d="M12.2 4.2L15.4 7L12.4 12.4L8.2 13.6L8.6 9Z" fill="#f6f6f6" stroke="#222" stroke-width="0.9"/><path d="M12.2 4.2L15.4 7L14.4 8.6L11.2 6Z" fill="#e04020"/><path d="M11.2 6L14.4 8.6L13.8 9.6L10.6 7Z" fill="#f4d020"/><path d="M8.2 13.6L11 9.8" stroke="#222" stroke-width="0.7"/><path d="M14.6 2.6L16.8 4.4" stroke="#3060a0" stroke-width="1.4"/></svg>
<svg class="ic" style="left:9.0px;top:376.5px" width="20" height="20" viewBox="0 0 20 20"><text x="9.4" y="15.6" text-anchor="middle" font-family="Liberation Sans,DejaVu Sans,sans-serif" font-weight="bold" font-size="15" fill="#000">A</text><path d="M15.6 4.4V15.8M14.6 4.4H16.6M14.6 15.8H16.6" stroke="#444" stroke-width="0.7"/></svg>
<svg class="ic" style="left:9.0px;top:395.5px" width="20" height="20" viewBox="0 0 20 20"><path d="M4.6 3.6l1 .6M6.6 4.8l1 .4M5 6.2l1 .4M7.2 6.6l.8.4M4.6 8.6l1 .2M8.4 3.4l.8.6" stroke="#555" stroke-width="0.8"/><path d="M9.6 5L12 3.8L13 5.4L11 6.4Z" fill="#777"/><path d="M9.4 7.4L13.6 5.4L16.8 12.4L12.6 14.6Z" fill="#5cae1c" stroke="#3a7a08" stroke-width="0.8"/><path d="M10.6 7.8L12.6 6.8L15 12L13 13Z" fill="#a8e060"/></svg>
<svg class="ic" style="left:9.0px;top:414.5px" width="20" height="20" viewBox="0 0 20 20"><path d="M9.6 3.8L15.6 7L10.4 15.4L4.4 12.2Z" fill="#f6c4b4" stroke="#a89088" stroke-width="0.8"/><path d="M6.6 8.6L12.6 11.8L10.4 15.4L4.4 12.2Z" fill="#f8d8cc"/><path d="M9.6 3.8L15.6 7L10.4 15.4L4.4 12.2Z" fill="none" stroke="#a89088" stroke-width="0.8"/></svg>
<svg class="ic" style="left:9.0px;top:433.5px" width="20" height="20" viewBox="0 0 20 20"><ellipse cx="10" cy="15.8" rx="5.6" ry="1.6" fill="#7ab87a" stroke="#3a7a3a" stroke-width="0.7"/><path d="M9.4 15.6V11" stroke="#3a7a3a" stroke-width="1.2"/><path d="M6.4 6.4L13.4 4.2L16 9.8L9.4 12.6Z" fill="#6c9ccc" stroke="#2c4c7c" stroke-width="0.9"/><ellipse cx="8" cy="9.4" rx="1.8" ry="3.3" transform="rotate(-20 8 9.4)" fill="#b8d4f0" stroke="#2c4c7c" stroke-width="0.8"/><path d="M5.6 6.8Q4.4 9 5.4 11" fill="none" stroke="#3a7a3a" stroke-width="1"/></svg>
<svg class="ic" style="left:9.0px;top:452.5px" width="20" height="20" viewBox="0 0 20 20"><defs><linearGradient id="ggr" x1="0" y1="0" x2="1" y2="1"><stop offset="0" stop-color="#5cb860"/><stop offset="1" stop-color="#d0ecd0"/></linearGradient></defs><rect x="3.8" y="4.3" width="12.4" height="11.2" fill="url(#ggr)"/><path d="M6.8 7.2L13.6 12.8" stroke="#222" stroke-width="0.9"/><rect x="5.4" y="5.8" width="2.6" height="2.6" fill="#fff" stroke="#222" stroke-width="0.7"/><circle cx="13.8" cy="13" r="1.5" fill="#fff" stroke="#222" stroke-width="0.7"/></svg>
<svg class="ic" style="left:9.0px;top:471.5px" width="20" height="20" viewBox="0 0 20 20"><path d="M12.4 7L14.8 9.4L8.4 15.4L6.4 16.6L6 16L7.2 14.2Z" fill="#b8cce0" stroke="#223" stroke-width="0.9"/><path d="M11.6 6L14 3.6Q15.6 2.6 16.6 3.8Q17.6 5 16.4 6.4L14 8.6L15 9.6L14.2 10.4L10.6 6.8L11.4 6Z" fill="#111"/></svg>
<svg class="ic" style="left:9.0px;top:490.5px" width="20" height="20" viewBox="0 0 20 20"><path d="M10.4 9.4V12.4M6 14V12.4H15V14" fill="none" stroke="#445" stroke-width="0.8"/><rect x="8" y="4.6" width="5" height="4.6" fill="#f0d868" stroke="#4a6a9a" stroke-width="0.9"/><rect x="8" y="4.6" width="5" height="1.6" fill="#7a9ccc"/><rect x="3.8" y="13.6" width="4.4" height="4" fill="#b4ccec" stroke="#4a6a9a" stroke-width="0.9"/><rect x="12.8" y="13.6" width="4.4" height="4" fill="#b4ccec" stroke="#4a6a9a" stroke-width="0.9"/></svg>
<div style="left:58px;top:159px;width:1px;height:6px;background:#000"></div>
<div style="left:63px;top:162px;width:1px;height:3px;background:#000"></div>
<div style="left:69px;top:150px;width:1px;height:15px;background:#000"></div>
<div class="t" style="left:71.6px;top:149.3px;font-size:7.5px;line-height:8px;height:8px;letter-spacing:-0.5px;-webkit-text-stroke:0.25px #000">100</div>
<div style="left:74px;top:162px;width:1px;height:3px;background:#000"></div>
<div style="left:80px;top:159px;width:1px;height:6px;background:#000"></div>
<div style="left:85px;top:162px;width:1px;height:3px;background:#000"></div>
<div style="left:91px;top:159px;width:1px;height:6px;background:#000"></div>
<div style="left:96px;top:162px;width:1px;height:3px;background:#000"></div>
<div style="left:102px;top:159px;width:1px;height:6px;background:#000"></div>
<div style="left:108px;top:162px;width:1px;height:3px;background:#000"></div>
<div style="left:113px;top:159px;width:1px;height:6px;background:#000"></div>
<div style="left:119px;top:162px;width:1px;height:3px;background:#000"></div>
<div style="left:124px;top:150px;width:1px;height:15px;background:#000"></div>
<div class="t" style="left:126.6px;top:149.3px;font-size:7.5px;line-height:8px;height:8px;letter-spacing:-0.5px;-webkit-text-stroke:0.25px #000">150</div>
<div style="left:130px;top:162px;width:1px;height:3px;background:#000"></div>
<div style="left:135px;top:159px;width:1px;height:6px;background:#000"></div>
<div style="left:141px;top:162px;width:1px;height:3px;background:#000"></div>
<div style="left:146px;top:159px;width:1px;height:6px;background:#000"></div>
<div style="left:152px;top:162px;width:1px;height:3px;background:#000"></div>
<div style="left:157px;top:159px;width:1px;height:6px;background:#000"></div>
<div style="left:163px;top:162px;width:1px;height:3px;background:#000"></div>
<div style="left:168px;top:159px;width:1px;height:6px;background:#000"></div>
<div style="left:174px;top:162px;width:1px;height:3px;background:#000"></div>
<div style="left:179px;top:150px;width:1px;height:15px;background:#000"></div>
<div class="t" style="left:181.6px;top:149.3px;font-size:7.5px;line-height:8px;height:8px;letter-spacing:-0.5px;-webkit-text-stroke:0.25px #000">200</div>
<div style="left:185px;top:162px;width:1px;height:3px;background:#000"></div>
<div style="left:191px;top:159px;width:1px;height:6px;background:#000"></div>
<div style="left:196px;top:162px;width:1px;height:3px;background:#000"></div>
<div style="left:202px;top:159px;width:1px;height:6px;background:#000"></div>
<div style="left:207px;top:162px;width:1px;height:3px;background:#000"></div>
<div style="left:213px;top:159px;width:1px;height:6px;background:#000"></div>
<div style="left:218px;top:162px;width:1px;height:3px;background:#000"></div>
<div style="left:224px;top:159px;width:1px;height:6px;background:#000"></div>
<div style="left:229px;top:162px;width:1px;height:3px;background:#000"></div>
<div style="left:235px;top:150px;width:1px;height:15px;background:#000"></div>
<div class="t" style="left:237.6px;top:149.3px;font-size:7.5px;line-height:8px;height:8px;letter-spacing:-0.5px;-webkit-text-stroke:0.25px #000">250</div>
<div style="left:240px;top:162px;width:1px;height:3px;background:#000"></div>
<div style="left:246px;top:159px;width:1px;height:6px;background:#000"></div>
<div style="left:251px;top:162px;width:1px;height:3px;background:#000"></div>
<div style="left:257px;top:159px;width:1px;height:6px;background:#000"></div>
<div style="left:263px;top:162px;width:1px;height:3px;background:#000"></div>
<div style="left:268px;top:159px;width:1px;height:6px;background:#000"></div>
<div style="left:274px;top:162px;width:1px;height:3px;background:#000"></div>
<div style="left:279px;top:159px;width:1px;height:6px;background:#000"></div>
<div style="left:285px;top:162px;width:1px;height:3px;background:#000"></div>
<div style="left:290px;top:150px;width:1px;height:15px;background:#000"></div>
<div class="t" style="left:292.6px;top:149.3px;font-size:7.5px;line-height:8px;height:8px;letter-spacing:-0.5px;-webkit-text-stroke:0.25px #000">300</div>
<div style="left:296px;top:162px;width:1px;height:3px;background:#000"></div>
<div style="left:301px;top:159px;width:1px;height:6px;background:#000"></div>
<div style="left:307px;top:162px;width:1px;height:3px;background:#000"></div>
<div style="left:312px;top:159px;width:1px;height:6px;background:#000"></div>
<div style="left:318px;top:162px;width:1px;height:3px;background:#000"></div>
<div style="left:323px;top:159px;width:1px;height:6px;background:#000"></div>
<div style="left:329px;top:162px;width:1px;height:3px;background:#000"></div>
<div style="left:334px;top:159px;width:1px;height:6px;background:#000"></div>
<div style="left:340px;top:162px;width:1px;height:3px;background:#000"></div>
<div style="left:346px;top:150px;width:1px;height:15px;background:#000"></div>
<div class="t" style="left:348.6px;top:149.3px;font-size:7.5px;line-height:8px;height:8px;letter-spacing:-0.5px;-webkit-text-stroke:0.25px #000">350</div>
<div style="left:351px;top:162px;width:1px;height:3px;background:#000"></div>
<div style="left:357px;top:159px;width:1px;height:6px;background:#000"></div>
<div style="left:362px;top:162px;width:1px;height:3px;background:#000"></div>
<div style="left:368px;top:159px;width:1px;height:6px;background:#000"></div>
<div style="left:373px;top:162px;width:1px;height:3px;background:#000"></div>
<div style="left:379px;top:159px;width:1px;height:6px;background:#000"></div>
<div style="left:384px;top:162px;width:1px;height:3px;background:#000"></div>
<div style="left:390px;top:159px;width:1px;height:6px;background:#000"></div>
<div style="left:395px;top:162px;width:1px;height:3px;background:#000"></div>
<div style="left:401px;top:150px;width:1px;height:15px;background:#000"></div>
<div class="t" style="left:403.6px;top:149.3px;font-size:7.5px;line-height:8px;height:8px;letter-spacing:-0.5px;-webkit-text-stroke:0.25px #000">400</div>
<div style="left:406px;top:162px;width:1px;height:3px;background:#000"></div>
<div style="left:412px;top:159px;width:1px;height:6px;background:#000"></div>
<div style="left:417px;top:162px;width:1px;height:3px;background:#000"></div>
<div style="left:423px;top:159px;width:1px;height:6px;background:#000"></div>
<div style="left:429px;top:162px;width:1px;height:3px;background:#000"></div>
<div style="left:434px;top:159px;width:1px;height:6px;background:#000"></div>
<div style="left:440px;top:162px;width:1px;height:3px;background:#000"></div>
<div style="left:445px;top:159px;width:1px;height:6px;background:#000"></div>
<div style="left:451px;top:162px;width:1px;height:3px;background:#000"></div>
<div style="left:456px;top:150px;width:1px;height:15px;background:#000"></div>
<div class="t" style="left:458.6px;top:149.3px;font-size:7.5px;line-height:8px;height:8px;letter-spacing:-0.5px;-webkit-text-stroke:0.25px #000">450</div>
<div style="left:462px;top:162px;width:1px;height:3px;background:#000"></div>
<div style="left:467px;top:159px;width:1px;height:6px;background:#000"></div>
<div style="left:473px;top:162px;width:1px;height:3px;background:#000"></div>
<svg class="ic" style="left:471px;top:158px" width="4" height="5"><path d="M0 0H4V4.5Z" fill="#000"/></svg>
<div style="left:47px;top:175px;width:5px;height:1px;background:#000"></div>
<div style="left:50px;top:186px;width:2px;height:1px;background:#000"></div>
<div style="left:47px;top:197px;width:5px;height:1px;background:#000"></div>
<div style="left:50px;top:208px;width:2px;height:1px;background:#000"></div>
<div style="left:47px;top:219px;width:5px;height:1px;background:#000"></div>
<div style="left:50px;top:230px;width:2px;height:1px;background:#000"></div>
<div style="left:47px;top:241px;width:5px;height:1px;background:#000"></div>
<div style="left:50px;top:252px;width:2px;height:1px;background:#000"></div>
<div style="left:39px;top:263px;width:13px;height:1px;background:#000"></div>
<div class="t" style="left:39px;top:264.8px;font-size:7.5px;line-height:8px;height:8px;letter-spacing:-0.5px;-webkit-text-stroke:0.25px #000">9</div>
<div class="t" style="left:39px;top:273.1px;font-size:7.5px;line-height:8px;height:8px;letter-spacing:-0.5px;-webkit-text-stroke:0.25px #000">0</div>
<div class="t" style="left:39px;top:281.40000000000003px;font-size:7.5px;line-height:8px;height:8px;letter-spacing:-0.5px;-webkit-text-stroke:0.25px #000">0</div>
<div style="left:50px;top:274px;width:2px;height:1px;background:#000"></div>
<div style="left:47px;top:285px;width:5px;height:1px;background:#000"></div>
<div style="left:50px;top:296px;width:2px;height:1px;background:#000"></div>
<div style="left:47px;top:307px;width:5px;height:1px;background:#000"></div>
<div style="left:50px;top:319px;width:2px;height:1px;background:#000"></div>
<div style="left:47px;top:330px;width:5px;height:1px;background:#000"></div>
<div style="left:50px;top:341px;width:2px;height:1px;background:#000"></div>
<div style="left:47px;top:352px;width:5px;height:1px;background:#000"></div>
<div style="left:50px;top:363px;width:2px;height:1px;background:#000"></div>
<div style="left:39px;top:374px;width:13px;height:1px;background:#000"></div>
<div class="t" style="left:39px;top:375.8px;font-size:7.5px;line-height:8px;height:8px;letter-spacing:-0.5px;-webkit-text-stroke:0.25px #000">8</div>
<div class="t" style="left:39px;top:384.1px;font-size:7.5px;line-height:8px;height:8px;letter-spacing:-0.5px;-webkit-text-stroke:0.25px #000">0</div>
<div class="t" style="left:39px;top:392.40000000000003px;font-size:7.5px;line-height:8px;height:8px;letter-spacing:-0.5px;-webkit-text-stroke:0.25px #000">0</div>
<div style="left:50px;top:385px;width:2px;height:1px;background:#000"></div>
<div style="left:47px;top:396px;width:5px;height:1px;background:#000"></div>
<div style="left:50px;top:407px;width:2px;height:1px;background:#000"></div>
<div style="left:47px;top:418px;width:5px;height:1px;background:#000"></div>
<div style="left:50px;top:429px;width:2px;height:1px;background:#000"></div>
<div style="left:47px;top:440px;width:5px;height:1px;background:#000"></div>
<div style="left:50px;top:451px;width:2px;height:1px;background:#000"></div>
<div style="left:47px;top:462px;width:5px;height:1px;background:#000"></div>
<div style="left:50px;top:474px;width:2px;height:1px;background:#000"></div>
<div style="left:39px;top:485px;width:13px;height:1px;background:#000"></div>
<div class="t" style="left:39px;top:486.8px;font-size:7.5px;line-height:8px;height:8px;letter-spacing:-0.5px;-webkit-text-stroke:0.25px #000">7</div>
<div class="t" style="left:39px;top:495.1px;font-size:7.5px;line-height:8px;height:8px;letter-spacing:-0.5px;-webkit-text-stroke:0.25px #000">0</div>
<div class="t" style="left:39px;top:503.40000000000003px;font-size:7.5px;line-height:8px;height:8px;letter-spacing:-0.5px;-webkit-text-stroke:0.25px #000">0</div>
<div style="left:50px;top:496px;width:2px;height:1px;background:#000"></div>
<div style="left:47px;top:507px;width:5px;height:1px;background:#000"></div>
<div style="left:50px;top:518px;width:2px;height:1px;background:#000"></div>
<div style="left:47px;top:529px;width:5px;height:1px;background:#000"></div>
<div style="left:50px;top:540px;width:2px;height:1px;background:#000"></div>
<div style="left:47px;top:551px;width:5px;height:1px;background:#000"></div>
<div style="left:50px;top:562px;width:2px;height:1px;background:#000"></div>
<div style="left:47px;top:573px;width:5px;height:1px;background:#000"></div>
<div style="left:50px;top:584px;width:2px;height:1px;background:#000"></div>
<svg class="ic" style="left:45px;top:319px" width="6" height="9"><path d="M0 0L5 4.5L0 9Z" fill="#000"/></svg>
<div style="left:52px;top:165px;width:424px;height:424px;background:#fff"></div>
<svg class="ic" style="left:100px;top:250px" width="340" height="250" viewBox="100 250 340 250"><rect x="109.7" y="261.7" width="314.8" height="223.5" fill="#fff" stroke="#000" stroke-width="6.2" stroke-linejoin="round"/></svg>
<div style="left:107px;top:259px;width:321px;height:1px;background:repeating-linear-gradient(90deg,#b4b4b4 0 3px,#000 3px 7px,#b4b4b4 7px 8px)"></div>
<div style="left:107px;top:259px;width:1px;height:230px;background:repeating-linear-gradient(180deg,#b4b4b4 0 1px,#000 1px 5px,#b4b4b4 5px 8px)"></div>
<div style="left:107px;top:489px;width:322px;height:1px;background:repeating-linear-gradient(90deg,#606060 0 3px,#fff 3px 7px,#606060 7px 8px)"></div>
<div style="left:428px;top:259px;width:1px;height:231px;background:repeating-linear-gradient(180deg,#606060 0 1px,#fff 1px 5px,#606060 5px 8px)"></div>
<svg class="ic" style="left:95.0px;top:247.0px" width="11" height="11" viewBox="0 0 11 11"><path d="M0 0H7V1H6V3H7V4H8V5H10V4H11V11H4V10H5V8H4V7H3V6H1V7H0Z" transform="" fill="#000"/></svg>
<svg class="ic" style="left:428.0px;top:490.0px" width="11" height="11" viewBox="0 0 11 11"><path d="M0 0H7V1H6V3H7V4H8V5H10V4H11V11H4V10H5V8H4V7H3V6H1V7H0Z" transform="" fill="#000"/></svg>
<svg class="ic" style="left:428.0px;top:247.0px" width="11" height="11" viewBox="0 0 11 11"><path d="M0 0H7V1H6V3H7V4H8V5H10V4H11V11H4V10H5V8H4V7H3V6H1V7H0Z" transform="translate(11,0) scale(-1,1)" fill="#000"/></svg>
<svg class="ic" style="left:95.0px;top:490.0px" width="11" height="11" viewBox="0 0 11 11"><path d="M0 0H7V1H6V3H7V4H8V5H10V4H11V11H4V10H5V8H4V7H3V6H1V7H0Z" transform="translate(11,0) scale(-1,1)" fill="#000"/></svg>
<svg class="ic" style="left:263.0px;top:246.0px" width="9" height="13" viewBox="0 0 9 13"><path d="M0 4.5L4.5 0H5V2H8V0H8.5L13 4.5L8.5 9H8V7H5V9H4.5Z" transform="translate(9,0) rotate(90)" fill="#000"/></svg>
<svg class="ic" style="left:263.0px;top:489.0px" width="9" height="13" viewBox="0 0 9 13"><path d="M0 4.5L4.5 0H5V2H8V0H8.5L13 4.5L8.5 9H8V7H5V9H4.5Z" transform="translate(9,0) rotate(90)" fill="#000"/></svg>
<svg class="ic" style="left:94.0px;top:370.0px" width="13" height="9" viewBox="0 0 13 9"><path d="M0 4.5L4.5 0H5V2H8V0H8.5L13 4.5L8.5 9H8V7H5V9H4.5Z" transform="" fill="#000"/></svg>
<svg class="ic" style="left:427.0px;top:370.0px" width="13" height="9" viewBox="0 0 13 9"><path d="M0 4.5L4.5 0H5V2H8V0H8.5L13 4.5L8.5 9H8V7H5V9H4.5Z" transform="" fill="#000"/></svg>
<div style="left:4px;top:589px;width:878px;height:1px;background:#404040"></div>
<div style="left:482px;top:148px;width:381px;height:441px;background:#d4d0c8"></div>
<div style="left:482px;top:148px;width:1px;height:441px;background:#000"></div>
<div style="left:483px;top:148px;width:1px;height:441px;background:#000"></div>
<div style="left:482px;top:148px;width:381px;height:1px;background:#000"></div>
<div style="left:484px;top:149px;width:378px;height:1px;background:#404040"></div>
<div style="left:484px;top:150px;width:378px;height:23px;background:#808080"></div>
<div class="t" style="left:487px;top:155px;font-size:11px">Pfad-Effekte (Umschalt+Strg+7)</div>
<div style="left:838px;top:149px;width:1px;height:24px;background:#e8e6e0"></div>
<div style="left:862px;top:149px;width:1px;height:440px;background:#ffffff"></div>
<div style="left:864px;top:149px;width:1px;height:440px;background:#ffffff"></div>
<svg class="ic" style="left:820.5px;top:154.5px" width="12" height="12" viewBox="0 0 12 12"><rect x="0.8" y="0.8" width="10.4" height="10.4" rx="2" fill="none" stroke="#333" stroke-width="1"/><path d="M4 3L8.6 6L4 9Z" fill="#333"/></svg>
<svg class="ic" style="left:843.5px;top:154.5px" width="12" height="12" viewBox="0 0 12 12"><rect x="0.8" y="0.8" width="10.4" height="10.4" rx="2" fill="none" stroke="#222" stroke-width="1"/><path d="M3.2 3.2L8.8 8.8M8.8 3.2L3.2 8.8" stroke="#222" stroke-width="2"/></svg>
<div style="left:488px;top:186px;width:368px;height:41px;border:1px solid #808080"></div>
<div style="left:489px;top:187px;width:368px;height:41px;border:1px solid #ffffff;border-right-color:#ffffff;clip-path:polygon(0 0,100% 0,100% 100%,0 100%)"></div>
<div style="left:488px;top:186px;width:368px;height:41px;border:1px solid #808080"></div>
<div style="left:492px;top:185px;width:118px;height:3px;background:#d4d0c8"></div>
<div class="t" style="left:492px;top:179px;">Neuen Effekt anwenden</div>
<div class="sunk" style="left:491px;top:191px;width:232px;height:31px;"><i></i></div>
<div class="t" style="left:494px;top:201px;">Hüllen-Verformung</div>
<div class="btn" style="left:702px;top:194px;width:19px;height:26px;"><i></i></div>
<svg class="ic" style="left:708px;top:205px" width="8" height="5"><path d="M0 0H8L4 4.5Z" fill="#000"/></svg>
<div class="btn" style="left:729px;top:191px;width:127px;height:32px;"><i></i></div>
<svg class="ic" style="left:754.0px;top:197.0px" width="20" height="20" viewBox="0 0 20 20"><defs><linearGradient id="gpl" x1="0" y1="0" x2="0" y2="1"><stop offset="0" stop-color="#8cb4e4"/><stop offset="1" stop-color="#4a7cc0"/></linearGradient></defs><path d="M7 1H13V7H19.4V13H13V19.4H7V13H0.6V7H7Z" fill="url(#gpl)" stroke="#4a74b0" stroke-width="0.9" stroke-linejoin="round"/><path d="M8 2H12V8H18.4" fill="none" stroke="#b4d0f0" stroke-width="0.8"/></svg>
<div class="t" style="left:776px;top:201px;"><u>H</u>inzufügen</div>
<div style="left:488px;top:236px;width:368px;height:100px;border:1px solid #808080"></div>
<div style="left:489px;top:237px;width:368px;height:100px;border:1px solid #ffffff;border-right-color:#ffffff;clip-path:polygon(0 0,100% 0,100% 100%,0 100%)"></div>
<div style="left:488px;top:236px;width:368px;height:100px;border:1px solid #808080"></div>
<div style="left:492px;top:235px;width:58px;height:3px;background:#d4d0c8"></div>
<div class="t" style="left:492px;top:229px;">Effekt-Liste</div>
<div style="left:490px;top:241px;width:366px;height:59px;background:#fff"></div>
<div style="left:490px;top:242px;width:366px;height:21px;background:#0a246a"></div>
<div class="t" style="left:510px;top:247px;color:#fff">Hüllen-Verformung</div>
<svg class="ic" style="left:492.6px;top:246.6px" width="12" height="12" viewBox="0 0 12 12"><path d="M1.8 6.5Q6 2.6 10.2 6.5Q6 10 1.8 6.5Z" fill="#fff"/><circle cx="6" cy="6.4" r="1.7" fill="#000"/><path d="M2.6 3L3.6 4.4M4.8 1.8L5.2 3.4M7.2 1.8L6.8 3.4M9.4 3L8.4 4.4" stroke="#000" stroke-width="0.8"/></svg>
<div style="left:490px;top:302px;width:366px;height:32px;background:#d4d0c8;border-top:1px solid #ffffff;border-left:1px solid #ffffff;border-bottom:1px solid #808080;border-right:1px solid #808080"></div>
<svg class="ic" style="left:497.5px;top:310.5px" width="16" height="16" viewBox="0 0 16 16"><defs><linearGradient id="ggn" x1="0" y1="0" x2="1" y2="0"><stop offset="0" stop-color="#b4ee60"/><stop offset="1" stop-color="#6cc018"/></linearGradient></defs><path d="M8 1.4L14.6 8H11V14.6H5V8H1.4Z" fill="url(#ggn)" stroke="#4e9a06" stroke-width="1" stroke-linejoin="round"/></svg>
<svg class="ic" style="left:525.5px;top:310.5px" width="16" height="16" viewBox="0 0 16 16"><path d="M8 14.6L14.6 8H11V1.4H5V8H1.4Z" fill="url(#ggn)" stroke="#4e9a06" stroke-width="1" stroke-linejoin="round"/></svg>
<svg class="ic" style="left:554.0px;top:310.5px" width="16" height="16" viewBox="0 0 16 16"><rect x="1" y="6" width="14" height="4.4" rx="0.8" fill="#7ca8dc" stroke="#2c5494" stroke-width="1"/></svg>
<div style="left:488px;top:349px;width:368px;height:230px;border:1px solid #808080"></div>
<div style="left:489px;top:350px;width:368px;height:230px;border:1px solid #ffffff;border-right-color:#ffffff;clip-path:polygon(0 0,100% 0,100% 100%,0 100%)"></div>
<div style="left:488px;top:349px;width:368px;height:230px;border:1px solid #808080"></div>
<div style="left:492px;top:348px;width:87px;height:3px;background:#d4d0c8"></div>
<div class="t" style="left:492px;top:342px;">Derzeitiger Effekt</div>
<div class="t" style="left:572px;top:355px;font-weight:bold;width:200px;text-align:center;letter-spacing:0">Hüllen-Verformung</div>
<div class="sunk" style="left:497px;top:383px;width:13px;height:13px;"><i></i></div>
<svg class="ic" style="left:500px;top:386px" width="7" height="7"><path d="M0 2L2.5 4.5L7 0V2.5L2.5 7L0 4.5Z" fill="#000"/></svg>
<div class="t" style="left:517px;top:384px;">Aktiviere obere und untere Pfade</div>
<div class="sunk" style="left:497px;top:410px;width:13px;height:13px;"><i></i></div>
<svg class="ic" style="left:500px;top:413px" width="7" height="7"><path d="M0 2L2.5 4.5L7 0V2.5L2.5 7L0 4.5Z" fill="#000"/></svg>
<div class="t" style="left:517px;top:411px;">Aktiviere linke und rechte Pfade</div>
<div class="t" style="left:505.5px;top:441.5px;">Oberen Pfad verbiegen</div>
<svg class="ic" style="left:645.0px;top:435.5px" width="24" height="24" viewBox="0 0 24 24"><path d="M7.4 7.7L20 3.8M7.4 7.7L4 20.1" stroke="#8080d8" stroke-width="0.8" fill="none"/><rect x="4.4" y="4.7" width="6" height="6" fill="#4040f0" stroke="#2020c0" stroke-width="0.5"/><rect x="18.4" y="2.2" width="3.2" height="3.2" fill="#a0a0ff" stroke="#3030e0" stroke-width="0.7"/><rect x="2.4" y="18.5" width="3.2" height="3.2" fill="#a0a0ff" stroke="#3030e0" stroke-width="0.7"/><path d="M8.4 9.4L19.6 16L15 20.4Z" fill="#000"/><path d="M6.4 6.6L9.6 10.4" stroke="#fff" stroke-width="0.9"/></svg>
<svg class="ic" style="left:700.5px;top:434.5px" width="24" height="24" viewBox="0 0 24 24"><path d="M3.8 4H14.8V14.6H3.8Z" fill="#ececec" stroke="#bcbcbc" stroke-width="0.9"/><path d="M5.4 6.4H13M5.4 8.4H9" stroke="#cfcfcf" stroke-width="0.8"/><path d="M9.2 6.8H20.2V15L17.4 17.8H9.2Z" fill="#f2f2f2" stroke="#b4b4b4" stroke-width="0.9"/><path d="M11 9.6H18.4M11 11.6H18.4M11 13.6H18.4M11 15.6H15.6" stroke="#c8c8c8" stroke-width="0.8"/><path d="M17.4 17.8V15H20.2" fill="#e2e2e2" stroke="#b4b4b4" stroke-width="0.6"/></svg>
<svg class="ic" style="left:754.5px;top:435.5px" width="24" height="24" viewBox="0 0 24 24"><rect x="4.2" y="4.6" width="15.6" height="15.6" rx="1.4" fill="#b87a1e" stroke="#94600e" stroke-width="1"/><path d="M7.6 7.6H16.4V14.6L13.6 17.4H7.6Z" fill="#f6f6f6" stroke="#d0b890" stroke-width="0.5"/><path d="M13.6 17.4V14.6H16.4" fill="#ddd" stroke="#bbb" stroke-width="0.5"/><path d="M9.2 10H14.8M9.2 12H14.8M9.2 14H12.4" stroke="#bcbcbc" stroke-width="0.8"/><path d="M8.8 6.8V4.6Q12 1.8 15.2 4.6V6.8Z" fill="#b0b0b0" stroke="#808080" stroke-width="0.7"/></svg>
<svg class="ic" style="left:810.0px;top:435.5px" width="24" height="24" viewBox="0 0 24 24"><rect x="2.4" y="3.2" width="11" height="10" fill="#8fb0dc" stroke="#3c4c66" stroke-width="1.1"/><rect x="6.8" y="6.8" width="14.6" height="14.6" fill="#dfe8f4" stroke="#3c4c66" stroke-width="1.1"/><path d="M11.6 14V12.2Q14.2 8.8 16.8 12.2V14" fill="none" stroke="#707070" stroke-width="1.5"/><rect x="10.4" y="13.4" width="7.6" height="5.6" rx="0.8" fill="#f0c828" stroke="#7a5c06" stroke-width="0.9"/><rect x="11.2" y="14.2" width="6" height="1.6" fill="#fff4b0"/></svg>
<div class="t" style="left:505.5px;top:478px;">Rechten Pfad verbiegen</div>
<svg class="ic" style="left:647.0px;top:472.0px" width="24" height="24" viewBox="0 0 24 24"><path d="M7.4 7.7L20 3.8M7.4 7.7L4 20.1" stroke="#8080d8" stroke-width="0.8" fill="none"/><rect x="4.4" y="4.7" width="6" height="6" fill="#4040f0" stroke="#2020c0" stroke-width="0.5"/><rect x="18.4" y="2.2" width="3.2" height="3.2" fill="#a0a0ff" stroke="#3030e0" stroke-width="0.7"/><rect x="2.4" y="18.5" width="3.2" height="3.2" fill="#a0a0ff" stroke="#3030e0" stroke-width="0.7"/><path d="M8.4 9.4L19.6 16L15 20.4Z" fill="#000"/><path d="M6.4 6.6L9.6 10.4" stroke="#fff" stroke-width="0.9"/></svg>
<svg class="ic" style="left:702.0px;top:471.0px" width="24" height="24" viewBox="0 0 24 24"><path d="M3.8 4H14.8V14.6H3.8Z" fill="#ececec" stroke="#bcbcbc" stroke-width="0.9"/><path d="M5.4 6.4H13M5.4 8.4H9" stroke="#cfcfcf" stroke-width="0.8"/><path d="M9.2 6.8H20.2V15L17.4 17.8H9.2Z" fill="#f2f2f2" stroke="#b4b4b4" stroke-width="0.9"/><path d="M11 9.6H18.4M11 11.6H18.4M11 13.6H18.4M11 15.6H15.6" stroke="#c8c8c8" stroke-width="0.8"/><path d="M17.4 17.8V15H20.2" fill="#e2e2e2" stroke="#b4b4b4" stroke-width="0.6"/></svg>
<svg class="ic" style="left:755.0px;top:472.0px" width="24" height="24" viewBox="0 0 24 24"><rect x="4.2" y="4.6" width="15.6" height="15.6" rx="1.4" fill="#b87a1e" stroke="#94600e" stroke-width="1"/><path d="M7.6 7.6H16.4V14.6L13.6 17.4H7.6Z" fill="#f6f6f6" stroke="#d0b890" stroke-width="0.5"/><path d="M13.6 17.4V14.6H16.4" fill="#ddd" stroke="#bbb" stroke-width="0.5"/><path d="M9.2 10H14.8M9.2 12H14.8M9.2 14H12.4" stroke="#bcbcbc" stroke-width="0.8"/><path d="M8.8 6.8V4.6Q12 1.8 15.2 4.6V6.8Z" fill="#b0b0b0" stroke="#808080" stroke-width="0.7"/></svg>
<svg class="ic" style="left:811.0px;top:472.0px" width="24" height="24" viewBox="0 0 24 24"><rect x="2.4" y="3.2" width="11" height="10" fill="#8fb0dc" stroke="#3c4c66" stroke-width="1.1"/><rect x="6.8" y="6.8" width="14.6" height="14.6" fill="#dfe8f4" stroke="#3c4c66" stroke-width="1.1"/><path d="M11.6 14V12.2Q14.2 8.8 16.8 12.2V14" fill="none" stroke="#707070" stroke-width="1.5"/><rect x="10.4" y="13.4" width="7.6" height="5.6" rx="0.8" fill="#f0c828" stroke="#7a5c06" stroke-width="0.9"/><rect x="11.2" y="14.2" width="6" height="1.6" fill="#fff4b0"/></svg>
<div class="t" style="left:505.5px;top:514px;">Unteren Pfad verbiegen</div>
<svg class="ic" style="left:647.0px;top:508.0px" width="24" height="24" viewBox="0 0 24 24"><path d="M7.4 7.7L20 3.8M7.4 7.7L4 20.1" stroke="#8080d8" stroke-width="0.8" fill="none"/><rect x="4.4" y="4.7" width="6" height="6" fill="#4040f0" stroke="#2020c0" stroke-width="0.5"/><rect x="18.4" y="2.2" width="3.2" height="3.2" fill="#a0a0ff" stroke="#3030e0" stroke-width="0.7"/><rect x="2.4" y="18.5" width="3.2" height="3.2" fill="#a0a0ff" stroke="#3030e0" stroke-width="0.7"/><path d="M8.4 9.4L19.6 16L15 20.4Z" fill="#000"/><path d="M6.4 6.6L9.6 10.4" stroke="#fff" stroke-width="0.9"/></svg>
<svg class="ic" style="left:702.0px;top:507.0px" width="24" height="24" viewBox="0 0 24 24"><path d="M3.8 4H14.8V14.6H3.8Z" fill="#ececec" stroke="#bcbcbc" stroke-width="0.9"/><path d="M5.4 6.4H13M5.4 8.4H9" stroke="#cfcfcf" stroke-width="0.8"/><path d="M9.2 6.8H20.2V15L17.4 17.8H9.2Z" fill="#f2f2f2" stroke="#b4b4b4" stroke-width="0.9"/><path d="M11 9.6H18.4M11 11.6H18.4M11 13.6H18.4M11 15.6H15.6" stroke="#c8c8c8" stroke-width="0.8"/><path d="M17.4 17.8V15H20.2" fill="#e2e2e2" stroke="#b4b4b4" stroke-width="0.6"/></svg>
<svg class="ic" style="left:755.0px;top:508.0px" width="24" height="24" viewBox="0 0 24 24"><rect x="4.2" y="4.6" width="15.6" height="15.6" rx="1.4" fill="#b87a1e" stroke="#94600e" stroke-width="1"/><path d="M7.6 7.6H16.4V14.6L13.6 17.4H7.6Z" fill="#f6f6f6" stroke="#d0b890" stroke-width="0.5"/><path d="M13.6 17.4V14.6H16.4" fill="#ddd" stroke="#bbb" stroke-width="0.5"/><path d="M9.2 10H14.8M9.2 12H14.8M9.2 14H12.4" stroke="#bcbcbc" stroke-width="0.8"/><path d="M8.8 6.8V4.6Q12 1.8 15.2 4.6V6.8Z" fill="#b0b0b0" stroke="#808080" stroke-width="0.7"/></svg>
<svg class="ic" style="left:811.0px;top:508.0px" width="24" height="24" viewBox="0 0 24 24"><rect x="2.4" y="3.2" width="11" height="10" fill="#8fb0dc" stroke="#3c4c66" stroke-width="1.1"/><rect x="6.8" y="6.8" width="14.6" height="14.6" fill="#dfe8f4" stroke="#3c4c66" stroke-width="1.1"/><path d="M11.6 14V12.2Q14.2 8.8 16.8 12.2V14" fill="none" stroke="#707070" stroke-width="1.5"/><rect x="10.4" y="13.4" width="7.6" height="5.6" rx="0.8" fill="#f0c828" stroke="#7a5c06" stroke-width="0.9"/><rect x="11.2" y="14.2" width="6" height="1.6" fill="#fff4b0"/></svg>
<div class="t" style="left:506.5px;top:550px;">Linken Pfad verbiegen</div>
<svg class="ic" style="left:641.0px;top:544.0px" width="24" height="24" viewBox="0 0 24 24"><path d="M7.4 7.7L20 3.8M7.4 7.7L4 20.1" stroke="#8080d8" stroke-width="0.8" fill="none"/><rect x="4.4" y="4.7" width="6" height="6" fill="#4040f0" stroke="#2020c0" stroke-width="0.5"/><rect x="18.4" y="2.2" width="3.2" height="3.2" fill="#a0a0ff" stroke="#3030e0" stroke-width="0.7"/><rect x="2.4" y="18.5" width="3.2" height="3.2" fill="#a0a0ff" stroke="#3030e0" stroke-width="0.7"/><path d="M8.4 9.4L19.6 16L15 20.4Z" fill="#000"/><path d="M6.4 6.6L9.6 10.4" stroke="#fff" stroke-width="0.9"/></svg>
<svg class="ic" style="left:697.5px;top:543.0px" width="24" height="24" viewBox="0 0 24 24"><path d="M3.8 4H14.8V14.6H3.8Z" fill="#ececec" stroke="#bcbcbc" stroke-width="0.9"/><path d="M5.4 6.4H13M5.4 8.4H9" stroke="#cfcfcf" stroke-width="0.8"/><path d="M9.2 6.8H20.2V15L17.4 17.8H9.2Z" fill="#f2f2f2" stroke="#b4b4b4" stroke-width="0.9"/><path d="M11 9.6H18.4M11 11.6H18.4M11 13.6H18.4M11 15.6H15.6" stroke="#c8c8c8" stroke-width="0.8"/><path d="M17.4 17.8V15H20.2" fill="#e2e2e2" stroke="#b4b4b4" stroke-width="0.6"/></svg>
<svg class="ic" style="left:753.0px;top:544.0px" width="24" height="24" viewBox="0 0 24 24"><rect x="4.2" y="4.6" width="15.6" height="15.6" rx="1.4" fill="#b87a1e" stroke="#94600e" stroke-width="1"/><path d="M7.6 7.6H16.4V14.6L13.6 17.4H7.6Z" fill="#f6f6f6" stroke="#d0b890" stroke-width="0.5"/><path d="M13.6 17.4V14.6H16.4" fill="#ddd" stroke="#bbb" stroke-width="0.5"/><path d="M9.2 10H14.8M9.2 12H14.8M9.2 14H12.4" stroke="#bcbcbc" stroke-width="0.8"/><path d="M8.8 6.8V4.6Q12 1.8 15.2 4.6V6.8Z" fill="#b0b0b0" stroke="#808080" stroke-width="0.7"/></svg>
<svg class="ic" style="left:810.0px;top:544.0px" width="24" height="24" viewBox="0 0 24 24"><rect x="2.4" y="3.2" width="11" height="10" fill="#8fb0dc" stroke="#3c4c66" stroke-width="1.1"/><rect x="6.8" y="6.8" width="14.6" height="14.6" fill="#dfe8f4" stroke="#3c4c66" stroke-width="1.1"/><path d="M11.6 14V12.2Q14.2 8.8 16.8 12.2V14" fill="none" stroke="#707070" stroke-width="1.5"/><rect x="10.4" y="13.4" width="7.6" height="5.6" rx="0.8" fill="#f0c828" stroke="#7a5c06" stroke-width="0.9"/><rect x="11.2" y="14.2" width="6" height="1.6" fill="#fff4b0"/></svg>
<div style="left:484px;top:584px;width:378px;height:1px;background:#ffffff"></div>
<div style="left:484px;top:587px;width:378px;height:1px;background:#ffffff"></div>
<div class="chk" style="left:866px;top:148px;width:15px;height:441px;"></div>
<div class="btn" style="left:866px;top:148px;width:15px;height:15px;"><i></i></div>
<div class="btn" style="left:866px;top:163px;width:15px;height:405px;"><i></i></div>
<div class="btn" style="left:866px;top:574px;width:15px;height:15px;"><i></i></div>
<svg class="ic" style="left:870px;top:153px" width="7" height="4"><path d="M3.5 0L7 4H0Z" fill="#808080"/></svg>
<svg class="ic" style="left:870px;top:579px" width="7" height="4"><path d="M0 0H7L3.5 4Z" fill="#000"/></svg>
<div style="left:5px;top:590px;width:868px;height:37px;background:#000"></div>
<div style="left:6px;top:591px;width:15px;height:36px;background:#fff"></div>
<svg class="ic" style="left:6px;top:591px" width="15" height="36"><path d="M0.5 0L14.5 36M14.5 0L0.5 36" stroke="#800000" stroke-width="1.8" fill="none"/></svg>
<div style="left:21px;top:591px;width:15px;height:36px;background:#000000"></div>
<div style="left:36px;top:591px;width:15px;height:36px;background:#1a1a1a"></div>
<div style="left:51px;top:591px;width:15px;height:36px;background:#333333"></div>
<div style="left:66px;top:591px;width:15px;height:36px;background:#4d4d4d"></div>
<div style="left:81px;top:591px;width:15px;height:36px;background:#666666"></div>
<div style="left:96px;top:591px;width:15px;height:36px;background:#808080"></div>
<div style="left:111px;top:591px;width:15px;height:36px;background:#999999"></div>
<div style="left:126px;top:591px;width:15px;height:36px;background:#b3b3b3"></div>
<div style="left:141px;top:591px;width:15px;height:36px;background:#cccccc"></div>
<div style="left:156px;top:591px;width:15px;height:36px;background:#e6e6e6"></div>
<div style="left:171px;top:591px;width:15px;height:36px;background:#ececec"></div>
<div style="left:186px;top:591px;width:15px;height:36px;background:#f2f2f2"></div>
<div style="left:201px;top:591px;width:15px;height:36px;background:#f9f9f9"></div>
<div style="left:216px;top:591px;width:15px;height:36px;background:#ffffff"></div>
<div style="left:231px;top:591px;width:15px;height:36px;background:#800000"></div>
<div style="left:246px;top:591px;width:15px;height:36px;background:#ff0000"></div>
<div style="left:261px;top:591px;width:15px;height:36px;background:#808000"></div>
<div style="left:276px;top:591px;width:15px;height:36px;background:#ffff00"></div>
<div style="left:291px;top:591px;width:15px;height:36px;background:#008000"></div>
<div style="left:306px;top:591px;width:15px;height:36px;background:#00ff00"></div>
<div style="left:321px;top:591px;width:15px;height:36px;background:#008080"></div>
<div style="left:336px;top:591px;width:15px;height:36px;background:#00ffff"></div>
<div style="left:351px;top:591px;width:15px;height:36px;background:#000080"></div>
<div style="left:366px;top:591px;width:15px;height:36px;background:#0000ff"></div>
<div style="left:381px;top:591px;width:15px;height:36px;background:#800080"></div>
<div style="left:396px;top:591px;width:15px;height:36px;background:#ff00ff"></div>
<div style="left:411px;top:591px;width:15px;height:36px;background:#2b0000"></div>
<div style="left:426px;top:591px;width:15px;height:36px;background:#550000"></div>
<div style="left:441px;top:591px;width:15px;height:36px;background:#800000"></div>
<div style="left:456px;top:591px;width:15px;height:36px;background:#aa0000"></div>
<div style="left:471px;top:591px;width:15px;height:36px;background:#d40000"></div>
<div style="left:486px;top:591px;width:15px;height:36px;background:#ff0000"></div>
<div style="left:501px;top:591px;width:15px;height:36px;background:#ff2a2a"></div>
<div style="left:516px;top:591px;width:15px;height:36px;background:#ff5555"></div>
<div style="left:531px;top:591px;width:15px;height:36px;background:#ff8080"></div>
<div style="left:546px;top:591px;width:15px;height:36px;background:#ffaaaa"></div>
<div style="left:561px;top:591px;width:15px;height:36px;background:#ffd5d5"></div>
<div style="left:576px;top:591px;width:15px;height:36px;background:#280b0b"></div>
<div style="left:591px;top:591px;width:15px;height:36px;background:#501616"></div>
<div style="left:606px;top:591px;width:15px;height:36px;background:#782121"></div>
<div style="left:621px;top:591px;width:15px;height:36px;background:#a02c2c"></div>
<div style="left:636px;top:591px;width:15px;height:36px;background:#c83737"></div>
<div style="left:651px;top:591px;width:15px;height:36px;background:#d35f5f"></div>
<div style="left:666px;top:591px;width:15px;height:36px;background:#de8787"></div>
<div style="left:681px;top:591px;width:15px;height:36px;background:#e9afaf"></div>
<div style="left:696px;top:591px;width:15px;height:36px;background:#f4d7d7"></div>
<div style="left:711px;top:591px;width:15px;height:36px;background:#241c1c"></div>
<div style="left:726px;top:591px;width:15px;height:36px;background:#483737"></div>
<div style="left:741px;top:591px;width:15px;height:36px;background:#6c5353"></div>
<div style="left:756px;top:591px;width:15px;height:36px;background:#916f6f"></div>
<div style="left:771px;top:591px;width:15px;height:36px;background:#ac9393"></div>
<div style="left:786px;top:591px;width:15px;height:36px;background:#c8b7b7"></div>
<div style="left:801px;top:591px;width:15px;height:36px;background:#e3dbdb"></div>
<div style="left:816px;top:591px;width:15px;height:36px;background:#2b1100"></div>
<div style="left:831px;top:591px;width:15px;height:36px;background:#552200"></div>
<div style="left:846px;top:591px;width:15px;height:36px;background:#803300"></div>
<div style="left:861px;top:591px;width:10px;height:36px;background:#aa4400"></div>
<div style="left:871px;top:590px;width:2px;height:38px;background:#fff"></div>
<div style="left:5px;top:628px;width:868px;height:1px;background:#ffffff"></div>
<svg class="ic" style="left:874px;top:590px" width="5" height="8"><path d="M4.5 0V7.5L0 3.75Z" fill="#000"/></svg>
<div class="chk" style="left:5px;top:630px;width:868px;height:15px;"></div>
<div class="btn" style="left:5px;top:630px;width:15px;height:15px;"><i></i></div>
<div class="btn" style="left:20px;top:630px;width:111px;height:15px;"><i></i></div>
<div class="btn" style="left:858px;top:630px;width:15px;height:15px;"><i></i></div>
<svg class="ic" style="left:9px;top:634px" width="5" height="8"><path d="M4.5 0V7.5L0 3.75Z" fill="#808080"/></svg>
<svg class="ic" style="left:863.5px;top:634px" width="5" height="8"><path d="M0 0V7.5L4.5 3.75Z" fill="#000"/></svg>
<div class="t" style="left:5px;top:647px;">Füllung:</div>
<div class="t" style="left:5px;top:661px;">Kontur:</div>
<div style="left:48px;top:647px;width:78px;height:13px;background:#fff"></div>
<div style="left:48px;top:660px;width:53px;height:14px;background:#000"></div>
<div class="t" style="left:105px;top:661px;">5,81</div>
<div class="t" style="left:130px;top:654px;">O:</div>
<div class="sunk" style="left:144px;top:649px;width:27px;height:21px;"><i></i></div>
<div class="t" style="left:149px;top:654px;font-size:11px">100</div>
<div class="btn" style="left:170px;top:649px;width:11px;height:10px;"><i></i></div>
<div class="btn" style="left:170px;top:659px;width:11px;height:11px;"><i></i></div>
<svg class="ic" style="left:173px;top:652px" width="5" height="3"><path d="M2.5 0L5 3H0Z" fill="#808080"/></svg>
<svg class="ic" style="left:173px;top:663px" width="5" height="3"><path d="M0 0H5L2.5 3Z" fill="#000"/></svg>
<div style="left:184px;top:647px;width:1px;height:27px;background:#808080"></div>
<div style="left:185px;top:647px;width:1px;height:27px;background:#ffffff"></div>
<svg class="ic" style="left:188.5px;top:654.0px" width="12" height="12" viewBox="0 0 12 12"><path d="M1 6.6Q6 2.6 11 6.6Q6 10.4 1 6.6Z" fill="#eee" stroke="#333" stroke-width="0.7"/><circle cx="6" cy="6.5" r="1.9" fill="#222"/><path d="M2.2 3L3.2 4.4M4.4 1.8L4.9 3.4M7.6 1.8L7.1 3.4M9.8 3L8.8 4.4" stroke="#333" stroke-width="0.7"/></svg>
<svg class="ic" style="left:204.0px;top:654.0px" width="12" height="12" viewBox="0 0 12 12"><path d="M4.2 6V3.8Q5.8 1.4 7.8 3" fill="none" stroke="#888" stroke-width="1"/><rect x="3" y="5.6" width="6.4" height="5" rx="0.6" fill="#f6ecb4" stroke="#9a8a48" stroke-width="0.8"/><rect x="3.8" y="6.4" width="4.8" height="1.3" fill="#fffdf0"/></svg>
<div class="sunk" style="left:217px;top:647px;width:79px;height:26px;"><i></i></div>
<div class="t" style="left:222px;top:654px;font-weight:bold;font-size:10px;letter-spacing:-0.4px"><span style="font-size:11px;letter-spacing:0.6px">·</span>Ebene 1</div>
<div class="btn" style="left:276px;top:649px;width:18px;height:22px;"><i></i></div>
<svg class="ic" style="left:281px;top:658px" width="8" height="5"><path d="M0 0H8L4 4.5Z" fill="#000"/></svg>
<div class="t" style="left:302px;top:654px;letter-spacing:-0.1px">Farbe: <b>White</b>; <b>Klick</b> setzt die Füllung, <b>Shift+Klick</b> legt die Konturfarbe fest</div>
<div style="left:720px;top:647px;width:1px;height:27px;background:#808080"></div>
<div style="left:721px;top:647px;width:1px;height:27px;background:#ffffff"></div>
<div class="t" style="left:724px;top:648px;font-family:'Liberation Mono','DejaVu Sans Mono',monospace;font-size:10px;white-space:pre;letter-spacing:0">X:  465,85</div>
<div class="t" style="left:724px;top:662px;font-family:'Liberation Mono','DejaVu Sans Mono',monospace;font-size:10px;white-space:pre;letter-spacing:0">Y:  846,83</div>
<div class="t" style="left:794px;top:654px;">Z:</div>
<div class="sunk" style="left:806px;top:649px;width:47px;height:20px;"><i></i></div>
<div class="t" style="left:814px;top:653px;">111%</div>
<div class="btn" style="left:852px;top:649px;width:10px;height:10px;"><i></i></div>
<div class="btn" style="left:852px;top:659px;width:10px;height:10px;"><i></i></div>
<svg class="ic" style="left:855px;top:652px" width="5" height="3"><path d="M2.5 0L5 3H0Z" fill="#000"/></svg>
<svg class="ic" style="left:855px;top:663px" width="5" height="3"><path d="M0 0H5L2.5 3Z" fill="#000"/></svg>
<svg class="ic" style="left:867px;top:662px" width="14" height="14"><path d="M13 1L1 13M13 5L5 13M13 9L9 13" stroke="#808080" stroke-width="1.4"/><path d="M13 0L0 13M13 4L4 13M13 8L8 13" stroke="#fff" stroke-width="0.9"/></svg>
</body></html>
